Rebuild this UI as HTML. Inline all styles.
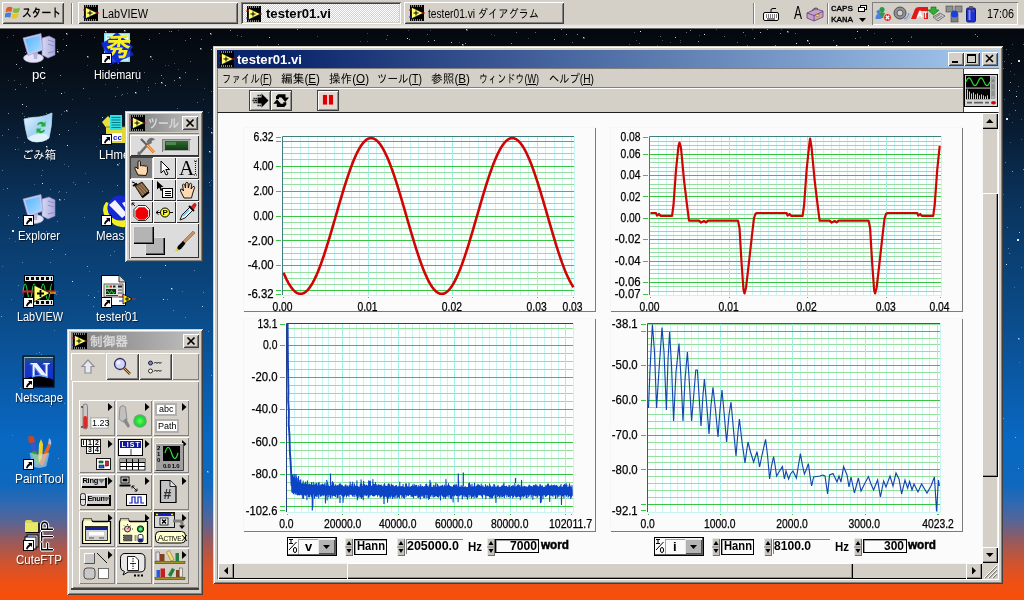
<!DOCTYPE html>
<html lang="ja"><head><meta charset="utf-8"><title>tester01.vi</title>
<style>
html,body{margin:0;padding:0}
body{width:1024px;height:600px;overflow:hidden;position:relative;background:linear-gradient(180deg,#05080d 0px,#05080d 28px,#07131f 90px,#081c32 130px,#092a4c 170px,#0a3560 210px,#0a3e70 250px,#0b4c8a 320px,#0a5cac 390px,#0868c2 440px,#0e68be 484px,#2c6ab2 502px,#5a6494 522px,#9a5a5a 542px,#cc5432 562px,#ee5014 582px,#f84e08 600px); font-family:"Liberation Sans","IPAGothic",sans-serif;font-size:12px}
.t,.s{position:absolute;white-space:nowrap}
u{text-decoration:underline;text-underline-offset:1px}
#root{position:absolute;left:0;top:0;width:1024px;height:600px;overflow:hidden;will-change:transform}
</style></head><body><div id="root">
<svg style="position:absolute;left:0px;top:0px;shape-rendering:crispEdges;" width="1024" height="600" viewBox="0 0 1024 600"><path d="M716 29.5h1M781 29.5h1M752 29.5h1M430 30.5h1M408 30.5h1M178 30.5h1M634 32.5h1M367 33.5h1M874 33.5h1M491 34.5h1M745 35.5h1M699 35.5h1M494 35.5h1M317 36.5h1M911 36.5h1M7 37.5h1M860 37.5h1M528 38.5h1M35 39.5h1M63 39.5h1M662 40.5h1M680 40.5h1M636 40.5h1M360 41.5h1M367 41.5h1M670 42.5h1M459 42.5h1M680 42.5h1M941 43.5h1M107 43.5h1M629 44.5h1M1012 44.5h1M657 45.5h1M26 47.5h1M42 49.5h1M172 50.5h1M63 50.5h1M1008 54.5h1M174 63.5h1M165 65.5h1M168 65.5h1M87 65.5h1M178 69.5h1M138 70.5h1M1010 71.5h1M1014 74.5h1M37 76.5h1M163 78.5h1M8 80.5h1M14 80.5h1M137 81.5h1M42 83.5h1M105 84.5h1M117 87.5h1M204 88.5h1M45 90.5h1M64 92.5h1M127 93.5h1M121 95.5h1M89 98.5h1M203 99.5h1M1004 99.5h1M72 99.5h1M1013 103.5h1M208 112.5h1M1009 114.5h1M44 118.5h1M1021 119.5h1M1012 122.5h1M76 122.5h1M109 125.5h1M98 126.5h1M208 127.5h1M211 128.5h1M1021 139.5h1M99 139.5h1M46 140.5h1M1010 142.5h1M96 146.5h1M18 149.5h1M64 164.5h1M85 173.5h1M211 180.5h1M34 184.5h1M210 185.5h1M3 189.5h1M102 191.5h1M58 192.5h1M1003 194.5h1M8 215.5h1M120 226.5h1M15 241.5h1M2 266.5h1M89 271.5h1M40 275.5h1M117 281.5h1M1014 287.5h1M57 291.5h1M98 291.5h1M182 291.5h1M25 293.5h1M56 294.5h1M112 296.5h1M11 299.5h1M51 305.5h1M49 309.5h1M103 322.5h1M54 330.5h1M36 353.5h1M1019 362.5h1M51 363.5h1M41 376.5h1M12 435.5h1" stroke="#dfe8f8" stroke-opacity="0.28" stroke-width="1" fill="none"/><path d="M169 31.5h1M535 32.5h1M516 32.5h1M686 32.5h1M795 33.5h1M159 33.5h1M427 34.5h1M387 35.5h1M13 35.5h1M81 35.5h1M237 35.5h1M660 36.5h1M241 36.5h1M724 36.5h1M94 37.5h1M911 37.5h1M201 39.5h1M386 39.5h1M833 40.5h1M185 40.5h1M892 41.5h1M737 42.5h1M572 42.5h1M885 42.5h1M639 43.5h1M34 44.5h1M1023 44.5h1M747 45.5h1M257 45.5h1M108 46.5h1M57 49.5h1M1006 49.5h1M127 50.5h1M17 50.5h1M25 52.5h1M152 59.5h1M1004 61.5h1M190 61.5h1M21 67.5h1M1003 68.5h1M19 68.5h1M117 69.5h1M144 72.5h1M155 83.5h1M20 84.5h1M180 85.5h1M1018 86.5h1M26 87.5h1M148 87.5h1M148 90.5h1M1016 91.5h1M211 91.5h1M122 94.5h1M115 96.5h1M197 102.5h1M177 108.5h1M64 111.5h1M46 113.5h1M22 113.5h1M61 114.5h1M24 116.5h1M28 117.5h1M105 120.5h1M30 134.5h1M102 134.5h1M2 135.5h1M17 137.5h1M24 142.5h1M50 160.5h1M1005 162.5h1M119 163.5h1M68 166.5h1M2 170.5h1M42 170.5h1M41 175.5h1M88 182.5h1M73 182.5h1M75 184.5h1M50 189.5h1M59 191.5h1M66 192.5h1M64 199.5h1M1020 207.5h1M118 208.5h1M84 217.5h1M57 221.5h1M1007 227.5h1M46 231.5h1M9 238.5h1M1008 248.5h1M114 251.5h1M1009 253.5h1M110 255.5h1M22 262.5h1M50 262.5h1M1021 267.5h1M194 270.5h1M117 280.5h1M18 285.5h1M203 292.5h1M88 295.5h1M167 299.5h1M93 306.5h1M173 310.5h1M185 317.5h1M208 331.5h1M39 352.5h1M41 354.5h1M211 375.5h1M32 381.5h1M30 385.5h1M20 388.5h1M64 403.5h1M50 406.5h1M1003 418.5h1M58 458.5h1" stroke="#dfe8f8" stroke-opacity="0.42" stroke-width="1" fill="none"/><path d="M767 29.5h1M561 29.5h1M297 29.5h1M690 30.5h1M867 30.5h1M230 30.5h1M171 31.5h1M743 32.5h1M780 33.5h1M566 34.5h1M577 34.5h1M975 34.5h1M977 36.5h1M891 38.5h1M855 38.5h1M190 38.5h1M754 38.5h1M149 39.5h1M409 39.5h1M428 41.5h1M908 41.5h1M698 41.5h1M511 43.5h1M465 43.5h1M278 44.5h1M775 45.5h1M211 49.5h1M118 63.5h1M1011 63.5h1M185 72.5h1M161 75.5h1M60 75.5h1M197 79.5h1M174 80.5h1M1010 82.5h1M83 88.5h1M15 89.5h1M26 106.5h1M1015 110.5h1M8 113.5h1M106 127.5h1M8 129.5h1M68 130.5h1M103 138.5h1M15 149.5h1M100 155.5h1M1023 169.5h1M1012 171.5h1M209 182.5h1M117 185.5h1M7 188.5h1M18 217.5h1M65 254.5h1M87 266.5h1M140 277.5h1M47 286.5h1M26 292.5h1M36 293.5h1M1 316.5h1M1015 437.5h1M1018 468.5h1M16 479.5h1" stroke="#dfe8f8" stroke-opacity="0.6" stroke-width="1" fill="none"/><path d="M466 29.5h1M124 30.5h1M105 31.5h1M787 31.5h1M760 32.5h1M66 33.5h1M210 33.5h1M106 34.5h1M675 37.5h1M583 37.5h1M269 37.5h1M120 38.5h1M554 39.5h1M434 40.5h1M451 42.5h1M809 43.5h1M462 44.5h1M50 47.5h1M200 48.5h1M87 56.5h1M150 56.5h1M16 64.5h1M179 77.5h1M165 85.5h1M1009 90.5h1M66 110.5h1M102 117.5h1M211 132.5h1M59 134.5h1M110 142.5h1M117 164.5h1M59 199.5h1M1019 232.5h1M52 249.5h1M94 297.5h1M202 306.5h1M1018 338.5h1M207 471.5h1" stroke="#dfe8f8" stroke-opacity="0.8" stroke-width="1" fill="none"/><path d="M640 31.5h1M857 31.5h1M704 34.5h1M407 38.5h1M807 40.5h1M796 43.5h1M836 45.5h1M66 45.5h1M868 45.5h1M44 48.5h1M57 51.5h1M42 67.5h1M161 82.5h1M135 92.5h1M61 93.5h1M1016 96.5h1M22 104.5h1M49 124.5h1M67 145.5h1M46 146.5h1M209 151.5h1M42 183.5h1M1006 264.5h1M165 265.5h1M72 281.5h1M171 288.5h1M163 299.5h1M125 311.5h1" stroke="#dfe8f8" stroke-opacity="1.0" stroke-width="1" fill="none"/><path d="M466 29.5h2M466 30.5h2M124 30.5h2M124 31.5h2M105 31.5h2M105 32.5h2M787 31.5h2M787 32.5h2M66 33.5h2M66 34.5h2M210 33.5h2M210 34.5h2M583 37.5h2M583 38.5h2M807 40.5h2M807 41.5h2M462 44.5h2M462 45.5h2M836 45.5h2M836 46.5h2M50 47.5h2M50 48.5h2M200 48.5h2M200 49.5h2M57 51.5h2M57 52.5h2M87 56.5h2M87 57.5h2M150 56.5h2M150 57.5h2M179 77.5h2M179 78.5h2M161 82.5h2M161 83.5h2M135 92.5h2M135 93.5h2M66 110.5h2M66 111.5h2M49 124.5h2M49 125.5h2M211 132.5h2M211 133.5h2M46 146.5h2M46 147.5h2M209 151.5h2M209 152.5h2M117 164.5h2M117 165.5h2M59 199.5h2M59 200.5h2M171 288.5h2M171 289.5h2M1018 338.5h2M1018 339.5h2M207 471.5h2M207 472.5h2" stroke="#dfe8f8" stroke-opacity="0.30" stroke-width="1" fill="none"/><rect x="1018" y="60" width="2" height="2" fill="#fff" opacity="0.9"/><rect x="1006" y="118" width="2" height="2" fill="#fff" opacity="0.9"/><rect x="1017" y="239" width="2" height="2" fill="#fff" opacity="0.9"/><rect x="948" y="110" width="2" height="2" fill="#fff" opacity="0.9"/><rect x="12" y="230" width="2" height="2" fill="#fff" opacity="0.9"/></svg>
<div style="position:absolute;left:0px;top:0px;width:1024px;height:29px;background:linear-gradient(180deg,#d4d0c8 0,#d4d0c8 24px,#e2e0da 25px,#ecebe6 27px,#f0efea 28px,#6c6c6c 28px,#6c6c6c 29px);"></div>
<div style="position:absolute;left:2px;top:2px;width:62px;height:22px;background:#d4d0c8;box-shadow:inset 1px 1px 0 #fff,inset -1px -1px 0 #404040,inset 2px 2px 0 #d4d0c8,inset -2px -2px 0 #808080;"></div>
<svg style="position:absolute;left:5px;top:5px;" width="17" height="15" viewBox="0 0 17 15"><path d="M1.5 3 Q4 1 7.5 2.5 L6.5 7 Q3.5 5.6 0.5 7.4Z" fill="#e8572a"/><path d="M8.6 2.9 Q11.5 4.2 15 2.4 L14 7 Q11 8.6 7.6 7.3Z" fill="#7dbb3c"/><path d="M0.3 8.4 Q3.3 6.6 6.3 8 L5.3 12.6 Q2.3 11.2 -0.7 13Z" fill="#3f7fd6"/><path d="M7.4 8.4 Q10.6 9.6 13.8 8 L12.8 12.6 Q9.8 14.2 6.4 12.9Z" fill="#f0c22a"/></svg>
<div class="t" style="left:22px;top:5.0px;line-height:16px;font-size:12px;font-weight:bold;color:#000;font-family:&quot;Liberation Sans&quot;,&quot;IPAGothic&quot;,sans-serif;transform:scaleX(0.8125);transform-origin:0 50%;">スタート</div>
<div style="position:absolute;left:71px;top:3px;width:1px;height:21px;background:#808080"></div>
<div style="position:absolute;left:72px;top:3px;width:1px;height:21px;background:#fff"></div>
<div style="position:absolute;left:78px;top:2px;width:160px;height:22px;background:#d4d0c8;box-shadow:inset 1px 1px 0 #fff,inset -1px -1px 0 #404040,inset 2px 2px 0 #d4d0c8,inset -2px -2px 0 #808080;"></div>
<svg style="position:absolute;left:83px;top:5px" width="16" height="16" viewBox="0 0 16 16"><rect x="1" y="0" width="14" height="16" fill="#000"/><path d="M2 1h12M2 15h12" stroke="#fff" stroke-width="1" stroke-dasharray="1 1"/><path d="M2.500 2.200 L14.500 8 L2.500 13.800Z" fill="#ffff70" stroke="#000" stroke-width="0.700"/><path d="M4.500 8h5M7 5.500v5" stroke="#000" stroke-width="1"/><path d="M0 5h3" stroke="#e00000" stroke-width="1"/><path d="M13 8h3" stroke="#e00000" stroke-width="1"/><path d="M0 12h2" stroke="#2020ff" stroke-width="1"/></svg>
<div class="t" style="left:102px;top:5.5px;line-height:16px;font-size:12px;font-weight:normal;color:#000;font-family:&quot;Liberation Sans&quot;,&quot;IPAGothic&quot;,sans-serif;transform:scaleX(0.9072);transform-origin:0 50%;">LabVIEW</div>
<div style="position:absolute;left:241px;top:2px;width:160px;height:22px;background:#eae8e3;box-shadow:inset 1px 1px 0 #808080,inset -1px -1px 0 #fff,inset 2px 2px 0 #404040,inset -2px -2px 0 #d4d0c8;background-image:repeating-conic-gradient(#fff 0 25%,#d4d0c8 0 50%);background-size:2px 2px;"></div>
<svg style="position:absolute;left:246px;top:6px" width="16" height="16" viewBox="0 0 16 16"><rect x="1" y="0" width="14" height="16" fill="#000"/><path d="M2 1h12M2 15h12" stroke="#fff" stroke-width="1" stroke-dasharray="1 1"/><path d="M2.500 2.200 L14.500 8 L2.500 13.800Z" fill="#ffff70" stroke="#000" stroke-width="0.700"/><path d="M4.500 8h5M7 5.500v5" stroke="#000" stroke-width="1"/><path d="M0 5h3" stroke="#e00000" stroke-width="1"/><path d="M13 8h3" stroke="#e00000" stroke-width="1"/><path d="M0 12h2" stroke="#2020ff" stroke-width="1"/></svg>
<div class="t" style="left:266px;top:6.0px;line-height:16px;font-size:12px;font-weight:bold;color:#000;font-family:&quot;Liberation Sans&quot;,&quot;IPAGothic&quot;,sans-serif;transform:scaleX(1.0947);transform-origin:0 50%;">tester01.vi</div>
<div style="position:absolute;left:404px;top:2px;width:160px;height:22px;background:#d4d0c8;box-shadow:inset 1px 1px 0 #fff,inset -1px -1px 0 #404040,inset 2px 2px 0 #d4d0c8,inset -2px -2px 0 #808080;"></div>
<svg style="position:absolute;left:409px;top:5px" width="16" height="16" viewBox="0 0 16 16"><rect x="1" y="0" width="14" height="16" fill="#000"/><path d="M2 1h12M2 15h12" stroke="#fff" stroke-width="1" stroke-dasharray="1 1"/><path d="M2.500 2.200 L14.500 8 L2.500 13.800Z" fill="#ffff70" stroke="#000" stroke-width="0.700"/><path d="M4.500 8h5M7 5.500v5" stroke="#000" stroke-width="1"/><path d="M0 5h3" stroke="#e00000" stroke-width="1"/><path d="M13 8h3" stroke="#e00000" stroke-width="1"/><path d="M0 12h2" stroke="#2020ff" stroke-width="1"/></svg>
<div class="t" style="left:428px;top:5.5px;line-height:16px;font-size:12px;font-weight:normal;color:#000;font-family:&quot;Liberation Sans&quot;,&quot;IPAGothic&quot;,sans-serif;transform:scaleX(0.8493);transform-origin:0 50%;">tester01.vi ダイアグラム</div>
<div style="position:absolute;left:753px;top:3px;width:1px;height:21px;background:#808080"></div>
<div style="position:absolute;left:754px;top:3px;width:1px;height:21px;background:#fff"></div>
<svg style="position:absolute;left:762px;top:6px;" width="18" height="16" viewBox="0 0 18 16"><rect x="1.5" y="6.5" width="15" height="8" rx="1.5" fill="#fff" stroke="#000"/><path d="M4 9h11M4 11h11" stroke="#000" stroke-dasharray="1 1"/><path d="M5 13h8" stroke="#000"/><path d="M9 6V4q0-1.5 2-1.5h3" stroke="#000" fill="none"/></svg>
<div class="t" style="left:794px;top:1.5px;line-height:22px;font-size:18px;font-weight:normal;color:#000;font-family:&quot;Liberation Sans&quot;,&quot;IPAGothic&quot;,sans-serif;transform:scaleX(0.6658);transform-origin:0 50%;">A</div>
<svg style="position:absolute;left:806px;top:5px;" width="18" height="17" viewBox="0 0 18 17"><path d="M1 8 L10 4 L17 6 L17 12 L8 16 L1 13Z" fill="#c8a0d0" stroke="#604070" stroke-width="0.8"/><path d="M1 8 L8 10.5 L17 6.5M8 10.5V16" stroke="#604070" stroke-width="0.8" fill="none"/><path d="M6 5.5 q3-4 6-1.5" stroke="#404040" fill="none"/><rect x="10" y="9.5" width="3" height="2" fill="#f0e060" stroke="#806000" stroke-width="0.4"/></svg>
<div style="position:absolute;left:827px;top:3px;width:1px;height:21px;background:#808080"></div>
<div style="position:absolute;left:828px;top:3px;width:1px;height:21px;background:#fff"></div>
<div class="t" style="left:831px;top:2.5px;line-height:12px;font-size:8px;font-weight:normal;color:#000;font-family:&quot;Liberation Mono&quot;,monospace;transform:scaleX(1.1456);transform-origin:0 50%;-webkit-text-stroke:0.3px #000;">CAPS</div>
<div class="t" style="left:831px;top:13.5px;line-height:12px;font-size:8px;font-weight:normal;color:#000;font-family:&quot;Liberation Mono&quot;,monospace;transform:scaleX(1.1456);transform-origin:0 50%;-webkit-text-stroke:0.3px #000;">KANA</div>
<svg style="position:absolute;left:857px;top:4px;" width="11" height="20" viewBox="0 0 11 20"><rect x="3.5" y="1.5" width="6" height="4" fill="#fff" stroke="#000"/><rect x="1.5" y="3.5" width="6" height="4" fill="#fff" stroke="#000"/><path d="M2 14h7l-3.5 4z" fill="#000"/></svg>
<div style="position:absolute;left:872px;top:2px;width:146px;height:23px;background:#d4d0c8;box-shadow:inset 1px 1px 0 #808080,inset -1px -1px 0 #fff;"></div>
<svg style="position:absolute;left:875px;top:5px;" width="18" height="18" viewBox="0 0 18 18"><circle cx="7" cy="4.5" r="2.6" fill="#2a9a48"/><path d="M3 13 q0-6 4-6 q4 0 4 6z" fill="#2a9a48"/><circle cx="3.5" cy="7" r="2" fill="#4a80d8"/><path d="M0.5 14 q0-5 3-5 q3 0 3 5z" fill="#4a80d8"/><circle cx="12.5" cy="12.5" r="4" fill="#e03020" stroke="#fff" stroke-width="0.6"/><path d="M10.8 10.8l3.4 3.4M14.2 10.8l-3.4 3.4" stroke="#fff" stroke-width="1.3"/></svg>
<svg style="position:absolute;left:893px;top:5px;" width="18" height="18" viewBox="0 0 18 18"><circle cx="7" cy="8" r="6" fill="#909090" stroke="#505050"/><circle cx="7" cy="8" r="3" fill="#d0d0d0" stroke="#606060"/><path d="M11 14 q4-1 5-6" stroke="#7090d0" fill="none" stroke-width="1.2"/><path d="M12 16 q5-2 6-7" stroke="#a0b8e8" fill="none"/></svg>
<svg style="position:absolute;left:910px;top:6px;" width="19" height="15" viewBox="0 0 19 15"><path d="M1 13 L5 3 Q6 1 9 1 L18 1 L18 13 L14 13 L14 5 L9 5 L6 13Z" fill="#e01818"/><path d="M7.5 11.5 L10 5.5 L12 11.5M8.5 9.5h3M13.5 6h4M15.5 6v6" stroke="#fff" stroke-width="1.3" fill="none"/></svg>
<svg style="position:absolute;left:928px;top:5px;" width="18" height="18" viewBox="0 0 18 18"><path d="M3 2 h5 v3 h3 l-5.5 5 L0 5 h3z" fill="#30b030" stroke="#106010" stroke-width="0.6"/><path d="M5 12 L12 8 L17 11 L10 16Z" fill="#c8c8c8" stroke="#505050" stroke-width="0.7"/><path d="M7 12.5l5-3M9 14l5-3" stroke="#505050" stroke-width="0.6"/></svg>
<svg style="position:absolute;left:945px;top:5px;" width="18" height="18" viewBox="0 0 18 18"><rect x="1" y="1" width="7" height="6" fill="#909090" stroke="#404040" stroke-width="0.6"/><rect x="10" y="1" width="7" height="6" fill="#909090" stroke="#404040" stroke-width="0.6"/><rect x="6" y="9" width="7" height="8" fill="#808080" stroke="#404040" stroke-width="0.6"/><circle cx="9.5" cy="9" r="3.6" fill="#1840e0"/></svg>
<svg style="position:absolute;left:964px;top:5px;" width="14" height="18" viewBox="0 0 14 18"><rect x="2.5" y="3" width="9" height="14" rx="1.5" fill="#2030d0" stroke="#101878"/><rect x="5" y="1" width="4" height="2.5" fill="#606060"/><rect x="4.5" y="5" width="2" height="10" fill="#8090ff"/><path d="M8 6h2" stroke="#f04040" stroke-width="1.2"/></svg>
<div class="t" style="left:987px;top:5.5px;line-height:16px;font-size:12px;font-weight:normal;color:#000;font-family:&quot;Liberation Sans&quot;,&quot;IPAGothic&quot;,sans-serif;transform:scaleX(0.8991);transform-origin:0 50%;">17:06</div>
<svg style="position:absolute;left:22px;top:33px;" width="34" height="32" viewBox="0 0 34 32"><defs><linearGradient id="scr" x1="0" y1="0" x2="1" y2="1"><stop offset="0" stop-color="#58b4ff"/><stop offset="1" stop-color="#a8dcff"/></linearGradient><linearGradient id="twr" x1="0" y1="0" x2="1" y2="0"><stop offset="0" stop-color="#d8d8f4"/><stop offset="1" stop-color="#a8a8dc"/></linearGradient></defs><path d="M20 5 L27 3 L33 6 L33 22 L26 25 L20 22Z" fill="url(#twr)" stroke="#8888c0" stroke-width="0.6"/><path d="M26 7 L32 9 M26 11l6 2 M26 20l6-1.5" stroke="#8484b8" stroke-width="0.8" fill="none"/><ellipse cx="11.5" cy="25" rx="10" ry="4.600" fill="#e4e4f6" stroke="#b8b8dc" stroke-width="0.6"/><path d="M11 19 L16 18 L15 26 L12 26Z" fill="#b4b4e0"/><path d="M1 5 L19 0.500 L21 17 L6 22.500Z" fill="#c8c8ee" stroke="#9c9cd0" stroke-width="0.6"/><path d="M3.200 6.300 L17.600 2.600 L19.300 15.800 L7 20.300Z" fill="url(#scr)"/></svg>
<div class="t" style="left:32px;top:66.5px;line-height:16px;font-size:12px;font-weight:normal;color:#fff;font-family:&quot;Liberation Sans&quot;,&quot;IPAGothic&quot;,sans-serif;transform:scaleX(1.1034);transform-origin:0 50%;text-shadow:1px 1px 1px rgba(0,0,0,.6);">pc</div>
<svg style="position:absolute;left:100px;top:33px;" width="34" height="32" viewBox="0 0 34 32"><rect x="4" y="0" width="26" height="29" fill="#7ee0e8"/><rect x="5.500" y="1.500" width="23" height="26" fill="#e8ffff"/><path d="M7 4h20M7 7h20M7 10h20M7 13h20M7 16h20M7 19h20M7 22h20M7 25h20" stroke="#30b8c8" stroke-width="1"/><path d="M17 -1 L33 14 L18 31 L2 12Z" fill="#1028d8"/><path d="M19 2 L34 22 L10 32 L1 10Z" fill="#1028d8" opacity="0.85"/></svg>
<div style="position:absolute;left:106px;top:32px;width:24px;height:30px;line-height:30px;font-size:25px;font-weight:bold;color:#f8f020;font-family:&quot;Liberation Sans&quot;,&quot;Noto Sans CJK JP&quot;,sans-serif;text-align:center;transform:skewX(-8deg)">秀</div>
<svg style="position:absolute;left:101px;top:53px;" width="11" height="11" viewBox="0 0 11 11"><rect x="0" y="0" width="11" height="11" fill="#000"/><rect x="1" y="1" width="9" height="9" fill="#fff"/><path d="M5 3h4v4l-1.3-1.300 C6 7 5 8 4.500 9.500 L3 9 C3.500 7 4.500 5.500 6.300 4.300z" fill="#000"/></svg>
<div class="t" style="left:94px;top:66.5px;line-height:16px;font-size:12px;font-weight:normal;color:#fff;font-family:&quot;Liberation Sans&quot;,&quot;IPAGothic&quot;,sans-serif;transform:scaleX(0.9033);transform-origin:0 50%;text-shadow:1px 1px 1px rgba(0,0,0,.6);">Hidemaru</div>
<svg style="position:absolute;left:22px;top:112px;" width="32" height="32" viewBox="0 0 32 32"><defs><linearGradient id="bin" x1="0" y1="0" x2="1" y2="1"><stop offset="0" stop-color="#f0f8ff"/><stop offset="0.500" stop-color="#a4d2f4"/><stop offset="1" stop-color="#d4eafc"/></linearGradient></defs><path d="M2 7 Q10 5 17 5 Q24 4 30 1 Q30 14 27 26 Q22 30 15 30 Q9 30 6 27 Q3 16 2 7Z" fill="url(#bin)" stroke="#b8dcf4" stroke-width="0.8"/><path d="M6 26 Q12 21 24 22 Q26 24 27 26 Q22 30 15 30 Q9 30 6 26Z" fill="#e6f4fc" opacity="0.9"/><path d="M15 12 q4-4 7-1 l1.500-1.500 v5 h-5 l1.500-1.500 q-2-2-4 0.500z" fill="#1fae3a"/><path d="M23 19 q-4 4-7 1 l-1.500 1.500 v-5 h5 l-1.500 1.500 q2 2 4-0.500z" fill="#1fae3a"/></svg>
<div class="t" style="left:22px;top:147.0px;line-height:16px;font-size:12px;font-weight:normal;color:#fff;font-family:&quot;Liberation Sans&quot;,&quot;IPAGothic&quot;,sans-serif;transform:scaleX(0.9444);transform-origin:0 50%;text-shadow:1px 1px 1px rgba(0,0,0,.6);">ごみ箱</div>
<svg style="position:absolute;left:100px;top:113px;" width="34" height="34" viewBox="0 0 34 34"><path d="M2 9 L8 3 L11 6 L11 16 L7 16Z" fill="#e8e040"/><rect x="6" y="14" width="22" height="16" fill="#e0d838"/><path d="M6 14h22" stroke="#908800"/><path d="M28 14 L32 10 V26 L28 30Z" fill="#a8a020"/><rect x="10" y="2" width="12" height="15" fill="#30e0e8"/><path d="M11.500 4.500h9M11.500 7h9M11.500 9.500h9M11.500 12h9M11.500 14.500h9" stroke="#087880" stroke-width="1"/><rect x="12" y="20" width="10" height="8" fill="#fff"/></svg>
<div style="position:absolute;left:113px;top:134px;font:bold 8px/8px &quot;Liberation Sans&quot;,sans-serif;color:#1010c8">cc</div>
<svg style="position:absolute;left:101px;top:134px;" width="11" height="11" viewBox="0 0 11 11"><rect x="0" y="0" width="11" height="11" fill="#000"/><rect x="1" y="1" width="9" height="9" fill="#fff"/><path d="M5 3h4v4l-1.3-1.300 C6 7 5 8 4.500 9.500 L3 9 C3.500 7 4.500 5.500 6.300 4.300z" fill="#000"/></svg>
<div class="t" style="left:99px;top:147.0px;line-height:16px;font-size:12px;font-weight:normal;color:#fff;font-family:&quot;Liberation Sans&quot;,&quot;IPAGothic&quot;,sans-serif;transform:scaleX(0.9470);transform-origin:0 50%;text-shadow:1px 1px 1px rgba(0,0,0,.6);">LHmelt</div>
<svg style="position:absolute;left:22px;top:194px;" width="34" height="32" viewBox="0 0 34 32"><defs><linearGradient id="scrb" x1="0" y1="0" x2="1" y2="1"><stop offset="0" stop-color="#58b4ff"/><stop offset="1" stop-color="#a8dcff"/></linearGradient><linearGradient id="twrb" x1="0" y1="0" x2="1" y2="0"><stop offset="0" stop-color="#d8d8f4"/><stop offset="1" stop-color="#a8a8dc"/></linearGradient></defs><path d="M20 5 L27 3 L33 6 L33 22 L26 25 L20 22Z" fill="url(#twrb)" stroke="#8888c0" stroke-width="0.6"/><path d="M26 7 L32 9 M26 11l6 2 M26 20l6-1.5" stroke="#8484b8" stroke-width="0.8" fill="none"/><ellipse cx="11.5" cy="25" rx="10" ry="4.600" fill="#e4e4f6" stroke="#b8b8dc" stroke-width="0.6"/><path d="M11 19 L16 18 L15 26 L12 26Z" fill="#b4b4e0"/><path d="M1 5 L19 0.500 L21 17 L6 22.500Z" fill="#c8c8ee" stroke="#9c9cd0" stroke-width="0.6"/><path d="M3.200 6.300 L17.600 2.600 L19.300 15.800 L7 20.300Z" fill="url(#scrb)"/></svg>
<svg style="position:absolute;left:23px;top:215px;" width="11" height="11" viewBox="0 0 11 11"><rect x="0" y="0" width="11" height="11" fill="#000"/><rect x="1" y="1" width="9" height="9" fill="#fff"/><path d="M5 3h4v4l-1.3-1.300 C6 7 5 8 4.500 9.500 L3 9 C3.500 7 4.500 5.500 6.300 4.300z" fill="#000"/></svg>
<div class="t" style="left:18px;top:228.0px;line-height:16px;font-size:12px;font-weight:normal;color:#fff;font-family:&quot;Liberation Sans&quot;,&quot;IPAGothic&quot;,sans-serif;transform:scaleX(0.9399);transform-origin:0 50%;text-shadow:1px 1px 1px rgba(0,0,0,.6);">Explorer</div>
<svg style="position:absolute;left:100px;top:194px;" width="34" height="34" viewBox="0 0 34 34"><path d="M6 8 Q0 16 6 24 Q12 32 26 30 L26 26 Q14 27 10 21 Q6 15 9 9Z" fill="#f4f020"/><circle cx="20" cy="14" r="12.500" fill="#1428d8"/><path d="M9 11 L15 6 L27 20 L22 24Z" fill="#f4f4f8"/><path d="M22 9 l5-2 -1 8z" fill="#f4f4f8"/><path d="M14 26 Q22 31 30 27 L30 32 Q20 35 13 30Z" fill="#f4f020"/></svg>
<svg style="position:absolute;left:101px;top:215px;" width="11" height="11" viewBox="0 0 11 11"><rect x="0" y="0" width="11" height="11" fill="#000"/><rect x="1" y="1" width="9" height="9" fill="#fff"/><path d="M5 3h4v4l-1.3-1.300 C6 7 5 8 4.500 9.500 L3 9 C3.500 7 4.500 5.500 6.300 4.300z" fill="#000"/></svg>
<div class="t" style="left:96px;top:228.0px;line-height:16px;font-size:12px;font-weight:normal;color:#fff;font-family:&quot;Liberation Sans&quot;,&quot;IPAGothic&quot;,sans-serif;transform:scaleX(0.9639);transform-origin:0 50%;text-shadow:1px 1px 1px rgba(0,0,0,.6);">Measure</div>
<svg style="position:absolute;left:22px;top:274px;" width="34" height="34" viewBox="0 0 34 34"><rect x="2" y="1" width="30" height="31" fill="#000"/><rect x="3" y="2" width="28" height="5" fill="#e8e8e8"/><rect x="3" y="26" width="28" height="5" fill="#e8e8e8"/><path d="M4 4.500h26M4 28.500h26" stroke="#000" stroke-width="3" stroke-dasharray="3 2"/><path d="M1 18 q2-16 4.500 0 t4.500 0 q2-16 4.500 0 t4.500 0 q2-16 4.500 0 t4.500 0 q1-8 2-8" stroke="#20d050" stroke-width="1.200" fill="none"/><path d="M0 17.500h34" stroke="#e02020" stroke-width="2"/><path d="M12 11 L28 19 L12 28Z" fill="#ffff70" stroke="#000" stroke-width="0.800"/><path d="M15 19.500h7M18.500 16v7" stroke="#000" stroke-width="1.800"/><path d="M28 19h6" stroke="#ff9020" stroke-width="1.500"/></svg>
<svg style="position:absolute;left:23px;top:297px;" width="11" height="11" viewBox="0 0 11 11"><rect x="0" y="0" width="11" height="11" fill="#000"/><rect x="1" y="1" width="9" height="9" fill="#fff"/><path d="M5 3h4v4l-1.3-1.300 C6 7 5 8 4.500 9.500 L3 9 C3.500 7 4.500 5.500 6.300 4.300z" fill="#000"/></svg>
<div class="t" style="left:17px;top:308.5px;line-height:16px;font-size:12px;font-weight:normal;color:#fff;font-family:&quot;Liberation Sans&quot;,&quot;IPAGothic&quot;,sans-serif;transform:scaleX(0.9072);transform-origin:0 50%;text-shadow:1px 1px 1px rgba(0,0,0,.6);">LabVIEW</div>
<svg style="position:absolute;left:100px;top:274px;" width="36" height="34" viewBox="0 0 36 34"><path d="M1.500 1.500 H19 L25.500 8 V31.500 H1.500Z" fill="#fff" stroke="#000"/><path d="M19 1.500V8H25.500" fill="#d8d8d8" stroke="#000" stroke-width="0.800"/><rect x="4" y="10" width="19" height="13" fill="#e0e0e0" stroke="#404040" stroke-width="0.800"/><rect x="6" y="15" width="10" height="5" fill="#103010"/><path d="M6.500 18 q1-3 2 0 t2 0 t2 0 t2 0" stroke="#30e040" fill="none" stroke-width="0.900"/><rect x="6" y="11.500" width="2.500" height="2" fill="#20c020"/><rect x="9.500" y="11.500" width="2.500" height="2" fill="#c02020"/><rect x="13" y="11.500" width="2.500" height="2" fill="#202020"/><rect x="18" y="11.500" width="4" height="2" fill="#202020"/><path d="M18 16h4M18 19h4M6 21.500h12" stroke="#404040"/><path d="M23 20 L32 25 L23 30Z" fill="#ffe820" stroke="#000" stroke-width="0.800"/><path d="M25 25h4M27 23v4" stroke="#000"/><path d="M32 25h4" stroke="#e02020"/><path d="M19 27h4" stroke="#2020d0"/><path d="M19 23h4" stroke="#e02020"/></svg>
<svg style="position:absolute;left:101px;top:297px;" width="11" height="11" viewBox="0 0 11 11"><rect x="0" y="0" width="11" height="11" fill="#000"/><rect x="1" y="1" width="9" height="9" fill="#fff"/><path d="M5 3h4v4l-1.3-1.300 C6 7 5 8 4.500 9.500 L3 9 C3.500 7 4.500 5.500 6.300 4.300z" fill="#000"/></svg>
<div class="t" style="left:96px;top:308.5px;line-height:16px;font-size:12px;font-weight:normal;color:#fff;font-family:&quot;Liberation Sans&quot;,&quot;IPAGothic&quot;,sans-serif;transform:scaleX(0.9686);transform-origin:0 50%;text-shadow:1px 1px 1px rgba(0,0,0,.6);">tester01</div>
<svg style="position:absolute;left:22px;top:355px;" width="34" height="34" viewBox="0 0 34 34"><defs><linearGradient id="ns" x1="0" y1="0" x2="0" y2="1"><stop offset="0" stop-color="#285858"/><stop offset="0.300" stop-color="#1838c0"/><stop offset="0.700" stop-color="#1030d0"/></linearGradient></defs><rect x="1" y="1" width="31" height="31" fill="url(#ns)" stroke="#000"/><path d="M2 2.500h29" stroke="#c0c8e0" stroke-width="0.800"/><path d="M2.500 2v29" stroke="#8090c0" stroke-width="0.800"/></svg>
<div style="position:absolute;left:27px;top:357px;width:26px;text-align:center;font:bold 28px/30px &quot;Liberation Serif&quot;,serif;color:#eef2ff;text-shadow:-1px 1px 0 #5878d8">N</div>
<svg style="position:absolute;left:22px;top:355px;" width="34" height="34" viewBox="0 0 34 34"><path d="M1.500 31.500 V25 Q14 17 31.500 25 V31.500Z" fill="#000"/><path d="M10 22 Q17 19 25 22" stroke="#60a0ff" stroke-width="1.500" fill="none"/></svg>
<svg style="position:absolute;left:23px;top:378px;" width="11" height="11" viewBox="0 0 11 11"><rect x="0" y="0" width="11" height="11" fill="#000"/><rect x="1" y="1" width="9" height="9" fill="#fff"/><path d="M5 3h4v4l-1.3-1.300 C6 7 5 8 4.500 9.500 L3 9 C3.500 7 4.500 5.500 6.300 4.300z" fill="#000"/></svg>
<div class="t" style="left:15px;top:390.0px;line-height:16px;font-size:12px;font-weight:normal;color:#fff;font-family:&quot;Liberation Sans&quot;,&quot;IPAGothic&quot;,sans-serif;transform:scaleX(0.9467);transform-origin:0 50%;text-shadow:1px 1px 1px rgba(0,0,0,.6);">Netscape</div>
<svg style="position:absolute;left:22px;top:436px;" width="34" height="34" viewBox="0 0 34 34"><path d="M7 3 L12 2 L17 24 L13 26Z" fill="#3858c8"/><path d="M6 1 q3-2 6 0 l1 5 -6 1z" fill="#c84820"/><path d="M17 8 L19 3 L21 8 L20 27 L16 27Z" fill="#f0d020"/><path d="M26 8 L29 9 L21 30 L17 28Z" fill="#f06020"/><path d="M27 2 q3 2 2 7 l-3-1z" fill="#b0b8d8"/><path d="M9 16 L14 15 L18 28 L14 29Z" fill="#30a040"/><path d="M8 17 Q17 21 27 17 L24 30 Q17 33 11 30Z" fill="#cfe8f4" opacity="0.550" stroke="#d8ecf8" stroke-width="0.800"/></svg>
<svg style="position:absolute;left:23px;top:459px;" width="11" height="11" viewBox="0 0 11 11"><rect x="0" y="0" width="11" height="11" fill="#000"/><rect x="1" y="1" width="9" height="9" fill="#fff"/><path d="M5 3h4v4l-1.3-1.300 C6 7 5 8 4.500 9.500 L3 9 C3.500 7 4.500 5.500 6.300 4.300z" fill="#000"/></svg>
<div class="t" style="left:15px;top:471.0px;line-height:16px;font-size:12px;font-weight:normal;color:#fff;font-family:&quot;Liberation Sans&quot;,&quot;IPAGothic&quot;,sans-serif;transform:scaleX(0.9924);transform-origin:0 50%;text-shadow:1px 1px 1px rgba(0,0,0,.6);">PaintTool</div>
<svg style="position:absolute;left:22px;top:518px;" width="34" height="34" viewBox="0 0 34 34"><path d="M3 4 q0-2 2-2 h4 l2 2 h5 v2 h-13z" fill="#d8d860"/><rect x="3" y="5" width="13" height="9" fill="#e8e868"/><path d="M3.500 14.500h13.500V5" stroke="#000" stroke-width="1.200" fill="none"/><rect x="5" y="17" width="11" height="12" fill="#fff" stroke="#000"/><rect x="3" y="19" width="11" height="12" fill="#fff" stroke="#000"/><path d="M6 18.500h4" stroke="#6080c0"/></svg>
<div style="position:absolute;left:31px;top:528px;width:34px;height:16px;text-align:center;font:16px/16px &quot;Liberation Sans&quot;,sans-serif;color:#000;transform:rotate(-90deg);transform-origin:50% 50%;letter-spacing:0.5px;text-shadow:1px 0 0 #fff,-1px 0 0 #fff,0 1px 0 #fff,0 -1px 0 #fff">FTP</div>
<svg style="position:absolute;left:23px;top:540px;" width="11" height="11" viewBox="0 0 11 11"><rect x="0" y="0" width="11" height="11" fill="#000"/><rect x="1" y="1" width="9" height="9" fill="#fff"/><path d="M5 3h4v4l-1.3-1.300 C6 7 5 8 4.500 9.500 L3 9 C3.500 7 4.500 5.500 6.300 4.300z" fill="#000"/></svg>
<div class="t" style="left:16px;top:552.0px;line-height:16px;font-size:12px;font-weight:normal;color:#fff;font-family:&quot;Liberation Sans&quot;,&quot;IPAGothic&quot;,sans-serif;transform:scaleX(0.9580);transform-origin:0 50%;text-shadow:1px 1px 1px rgba(0,0,0,.6);">CuteFTP</div>
<div style="position:absolute;left:125px;top:111px;width:78px;height:151px;background:#d4d0c8;box-shadow:inset 1px 1px 0 #d4d0c8,inset -1px -1px 0 #404040,inset 2px 2px 0 #fff,inset -2px -2px 0 #808080;"></div>
<div style="position:absolute;left:129px;top:114px;width:70px;height:18px;background:linear-gradient(90deg,#808080 0%,#868686 15%,#c0c0c0 100%);"></div>
<svg style="position:absolute;left:130px;top:115px" width="16" height="16" viewBox="0 0 16 16"><rect x="1" y="0" width="14" height="16" fill="#000"/><path d="M2 1h12M2 15h12" stroke="#fff" stroke-width="1" stroke-dasharray="1 1"/><path d="M2.500 2.200 L14.500 8 L2.500 13.800Z" fill="#ffff70" stroke="#000" stroke-width="0.700"/><path d="M4.500 8h5M7 5.500v5" stroke="#000" stroke-width="1"/><path d="M0 5h3" stroke="#e00000" stroke-width="1"/><path d="M13 8h3" stroke="#e00000" stroke-width="1"/><path d="M0 12h2" stroke="#2020ff" stroke-width="1"/></svg>
<div class="t" style="left:148px;top:114.5px;line-height:17px;font-size:13px;font-weight:bold;color:#d8d8d8;font-family:&quot;Liberation Sans&quot;,&quot;IPAGothic&quot;,sans-serif;transform:scaleX(0.7949);transform-origin:0 50%;">ツール</div>
<div style="position:absolute;left:182px;top:116px;width:16px;height:14px;background:#d4d0c8;box-shadow:inset 1px 1px 0 #fff,inset -1px -1px 0 #404040,inset 2px 2px 0 #d4d0c8,inset -2px -2px 0 #808080;"></div>
<svg style="position:absolute;left:182px;top:116px;" width="16" height="14" viewBox="0 0 16 14"><path d="M4.500 3.500l7 7M11.500 3.500l-7 7" stroke="#000" stroke-width="1.700"/></svg>
<div style="position:absolute;left:129px;top:133px;width:70px;height:126px;background:#d4d0c8;box-shadow:inset 1px 1px 0 #808080;"></div>
<div style="position:absolute;left:130px;top:135px;width:69px;height:21px;background:#dcdcdc;box-shadow:inset 1px 1px 0 #fff,inset -1px -1px 0 #303030;"></div>
<div style="position:absolute;left:130px;top:156px;width:69px;height:1px;background:#404040"></div>
<svg style="position:absolute;left:137px;top:136px;" width="24" height="20" viewBox="0 0 24 20"><path d="M3 17 L13 6" stroke="#707070" stroke-width="2.600"/><path d="M12 2.500 q4-2 6 1.500 l-3 0.500 -0.500 3 q-4 1-5-2z" fill="#707070"/><path d="M1 16 l2.500 2.500 M0.500 18.500 l3-1" stroke="#707070" stroke-width="2"/><path d="M4 3 L10 9" stroke="#606060" stroke-width="2.200"/><path d="M10 9 L17 16.500" stroke="#f07818" stroke-width="3"/><path d="M10 9 L17 16.500" stroke="#ffe0a0" stroke-width="0.800"/></svg>
<div style="position:absolute;left:162px;top:139px;width:29px;height:13px;background:#a8a8a8;box-shadow:inset 1px 1px 0 #808080,inset -1px -1px 0 #e0e0e0;"></div>
<div style="position:absolute;left:165px;top:141px;width:23px;height:9px;background:linear-gradient(180deg,#2e6a2e,#0f3d0f);"></div>
<div style="position:absolute;left:166px;top:142px;width:10px;height:3px;background:#5c9a5c;opacity:.7"></div>
<div style="position:absolute;left:130px;top:157px;width:23px;height:22px;background:#808080;box-shadow:inset 1px 1px 0 #404040,inset -1px -1px 0 #e8e8e8;"></div>
<div style="position:absolute;left:153px;top:157px;width:23px;height:22px;background:#dcdcdc;box-shadow:inset 1px 1px 0 #fff,inset -1px -1px 0 #303030;"></div>
<div style="position:absolute;left:176px;top:157px;width:23px;height:22px;background:#dcdcdc;box-shadow:inset 1px 1px 0 #fff,inset -1px -1px 0 #303030;"></div>
<div style="position:absolute;left:130px;top:179px;width:23px;height:22px;background:#dcdcdc;box-shadow:inset 1px 1px 0 #fff,inset -1px -1px 0 #303030;"></div>
<div style="position:absolute;left:153px;top:179px;width:23px;height:22px;background:#dcdcdc;box-shadow:inset 1px 1px 0 #fff,inset -1px -1px 0 #303030;"></div>
<div style="position:absolute;left:176px;top:179px;width:23px;height:22px;background:#dcdcdc;box-shadow:inset 1px 1px 0 #fff,inset -1px -1px 0 #303030;"></div>
<div style="position:absolute;left:130px;top:201px;width:23px;height:22px;background:#dcdcdc;box-shadow:inset 1px 1px 0 #fff,inset -1px -1px 0 #303030;"></div>
<div style="position:absolute;left:153px;top:201px;width:23px;height:22px;background:#dcdcdc;box-shadow:inset 1px 1px 0 #fff,inset -1px -1px 0 #303030;"></div>
<div style="position:absolute;left:176px;top:201px;width:23px;height:22px;background:#dcdcdc;box-shadow:inset 1px 1px 0 #fff,inset -1px -1px 0 #303030;"></div>
<svg style="position:absolute;left:130px;top:157px;" width="23" height="22" viewBox="0 0 23 22"><path d="M8 18 L5 12 q-1-2 1-2 l2 2 V4.500 q1.200-1.500 2.400 0 V9 q1.200-1.300 2.400 0 q1.200-1.200 2.400 0.300 q1.200-1 2.200 0.500 V15 l-1.500 3.500z" fill="#ffd8b0" stroke="#000" stroke-width="0.900"/></svg>
<svg style="position:absolute;left:153px;top:157px;" width="23" height="22" viewBox="0 0 23 22"><path d="M8 4 V16 L10.800 13.300 L13 18 L15 17 L12.800 12.500 H16.500Z" fill="#fff" stroke="#000" stroke-width="1"/></svg>
<div class="s" style="left:179px;top:156px;font:normal 21px/22px &quot;Liberation Sans&quot;,sans-serif;color:#000;font-family:&quot;Liberation Serif&quot;,serif;line-height:24px;">A</div>
<svg style="position:absolute;left:176px;top:157px;" width="23" height="22" viewBox="0 0 23 22"><path d="M19.500 4v14M18 4h3M18 18h3" stroke="#000" stroke-width="0.900" stroke-dasharray="1 1"/></svg>
<svg style="position:absolute;left:130px;top:179px;" width="23" height="22" viewBox="0 0 23 22"><path d="M5 7 L12 3 L19 12 L12 18Z" fill="#7a5a3a" stroke="#000" stroke-width="0.800"/><path d="M7 8l7 8M9 6.500l7 8M11 5l7 8" stroke="#c8a070" stroke-width="0.800"/><path d="M3 7 l4-2.500 M12 18.500 l7-5.500" stroke="#000" stroke-width="2"/><path d="M2 3 q3 0 4 3" stroke="#000" fill="none"/></svg>
<svg style="position:absolute;left:153px;top:179px;" width="23" height="22" viewBox="0 0 23 22"><path d="M4 2 V10.500 L6.200 8.500 L7.800 12 L9.500 11.200 L7.800 8 H10.500Z" fill="#000"/><rect x="9.500" y="9.500" width="10" height="9" fill="#fff" stroke="#000"/><path d="M11.500 12.500h6M11.500 14.500h6M11.500 16.500h6" stroke="#000" stroke-width="1" shape-rendering="crispEdges"/></svg>
<svg style="position:absolute;left:176px;top:179px;" width="23" height="22" viewBox="0 0 23 22"><path d="M8 19 L4.500 12 q-0.500-2.500 1.500-2 l1.500 2 L6.500 6 q1-2 2.300-0.200 L9.500 9 L9.700 4 q1.200-1.600 2.400 0 L12.300 9 L13.500 4.800 q1.400-1.300 2.300 0.400 L15 10 L17 7.500 q1.600-0.600 1.600 1 L16.500 15 L15.500 19z" fill="#ffd8b0" stroke="#000" stroke-width="0.900"/></svg>
<svg style="position:absolute;left:130px;top:201px;" width="23" height="22" viewBox="0 0 23 22"><path d="M8 4.500h7.500l4 4v7l-4 4H8l-4-4v-7z" fill="#fff" stroke="#000" stroke-width="0.800"/><path d="M8.800 6.300h6l3.400 3.400v5.600l-3.400 3.400h-6l-3.400-3.400V9.700z" fill="#f00000"/><path d="M2 2l3 3M2 2h2.500M2 2v2.500" stroke="#000" stroke-width="0.900" fill="none"/></svg>
<svg style="position:absolute;left:153px;top:201px;" width="23" height="22" viewBox="0 0 23 22"><path d="M3 11.500h17" stroke="#000" stroke-width="1"/><path d="M3 11.500l2.500-2M3 11.500l2.500 2" stroke="#000"/><circle cx="12" cy="11.500" r="4.500" fill="#ffff20" stroke="#000"/></svg>
<div class="s" style="left:162.4px;top:208px;font:bold 8px/9px &quot;Liberation Sans&quot;,sans-serif;color:#000;">P</div>
<svg style="position:absolute;left:176px;top:201px;" width="23" height="22" viewBox="0 0 23 22"><path d="M4 19 L6 14 L14 6 L17 9 L9 17Z" fill="#e8f8ff" stroke="#000" stroke-width="0.900"/><path d="M13 5 L18 10" stroke="#000" stroke-width="2"/><path d="M15 6 L18 2.500 q2.500-0.500 2 2 L17.500 8.500z" fill="#e02020" stroke="#800" stroke-width="0.600"/><path d="M7 15l6-6" stroke="#60c0e8" stroke-width="1.500"/></svg>
<div style="position:absolute;left:130px;top:223px;width:69px;height:35px;background:#dcdcdc;box-shadow:inset 1px 1px 0 #fff,inset -1px -1px 0 #303030;"></div>
<div style="position:absolute;left:146px;top:238px;width:19px;height:17px;background:#000"></div>
<div style="position:absolute;left:145px;top:237px;width:19px;height:17px;background:#b4b4b4;box-shadow:inset 1px 1px 0 #e4e4e4,inset -1px -1px 0 #606060;"></div>
<div style="position:absolute;left:134px;top:227px;width:20px;height:17px;background:#000"></div>
<div style="position:absolute;left:133px;top:226px;width:20px;height:17px;background:#b4b4b4;box-shadow:inset 1px 1px 0 #e4e4e4,inset -1px -1px 0 #606060;"></div>
<svg style="position:absolute;left:170px;top:228px;" width="28" height="28" viewBox="0 0 28 28"><path d="M23 3 L25 5 L14 16 L12 14Z" fill="#c89060" stroke="#705030" stroke-width="0.500"/><path d="M13 13 L15.500 15.500 L11 21 L6 23 L8 18Z" fill="#000"/><path d="M7 20 L9 22 L3.500 24Z" fill="#f0e020"/></svg>
<div style="position:absolute;left:67px;top:329px;width:136px;height:266px;background:#d4d0c8;box-shadow:inset 1px 1px 0 #d4d0c8,inset -1px -1px 0 #404040,inset 2px 2px 0 #fff,inset -2px -2px 0 #808080;"></div>
<div style="position:absolute;left:71px;top:332px;width:128px;height:18px;background:linear-gradient(90deg,#808080 0%,#868686 15%,#c0c0c0 100%);"></div>
<svg style="position:absolute;left:72px;top:333px" width="16" height="16" viewBox="0 0 16 16"><rect x="1" y="0" width="14" height="16" fill="#000"/><path d="M2 1h12M2 15h12" stroke="#fff" stroke-width="1" stroke-dasharray="1 1"/><path d="M2.500 2.200 L14.500 8 L2.500 13.800Z" fill="#ffff70" stroke="#000" stroke-width="0.700"/><path d="M4.500 8h5M7 5.500v5" stroke="#000" stroke-width="1"/><path d="M0 5h3" stroke="#e00000" stroke-width="1"/><path d="M13 8h3" stroke="#e00000" stroke-width="1"/><path d="M0 12h2" stroke="#2020ff" stroke-width="1"/></svg>
<div class="t" style="left:90px;top:333.0px;line-height:17px;font-size:13px;font-weight:bold;color:#d8d8d8;font-family:&quot;Liberation Sans&quot;,&quot;IPAGothic&quot;,sans-serif;transform:scaleX(0.9744);transform-origin:0 50%;">制御器</div>
<div style="position:absolute;left:183px;top:334px;width:16px;height:14px;background:#d4d0c8;box-shadow:inset 1px 1px 0 #fff,inset -1px -1px 0 #404040,inset 2px 2px 0 #d4d0c8,inset -2px -2px 0 #808080;"></div>
<svg style="position:absolute;left:183px;top:334px;" width="16" height="14" viewBox="0 0 16 14"><path d="M4.500 3.500l7 7M11.500 3.500l-7 7" stroke="#000" stroke-width="1.700"/></svg>
<div style="position:absolute;left:71px;top:353px;width:34px;height:27px;background:#d4d0c8;box-shadow:inset 1px 1px 0 #fff;"></div>
<div style="position:absolute;left:106px;top:353px;width:33px;height:27px;background:#dcd9d2;box-shadow:inset 1px 1px 0 #fff,inset -1px -1px 0 #404040,inset 2px 2px 0 #d4d0c8,inset -2px -2px 0 #808080;"></div>
<div style="position:absolute;left:139px;top:353px;width:33px;height:27px;background:#dcd9d2;box-shadow:inset 1px 1px 0 #fff,inset -1px -1px 0 #404040,inset 2px 2px 0 #d4d0c8,inset -2px -2px 0 #808080;"></div>
<div style="position:absolute;left:172px;top:353px;width:27px;height:27px;background:#d4d0c8;box-shadow:inset 1px 1px 0 #fff,inset -1px -1px 0 #808080;"></div>
<svg style="position:absolute;left:71px;top:353px;" width="34" height="27" viewBox="0 0 34 27"><path d="M17 7 L23 13.500 H20 V20 H14 V13.500 H11Z" fill="#e8e8f0" stroke="#909098" stroke-width="1.200"/></svg>
<svg style="position:absolute;left:106px;top:353px;" width="33" height="27" viewBox="0 0 33 27"><path d="M18 15 L24 21" stroke="#604020" stroke-width="2.600"/><path d="M18 15 L24 21" stroke="#e0a860" stroke-width="1"/><circle cx="14" cy="11" r="5.500" fill="#d0d4ff" stroke="#303060" stroke-width="1.300"/><circle cx="12.500" cy="9.500" r="2" fill="#f4f4ff"/></svg>
<svg style="position:absolute;left:139px;top:353px;" width="33" height="27" viewBox="0 0 33 27"><circle cx="11.500" cy="10" r="2" fill="#8080e0" stroke="#000" stroke-width="0.800"/><circle cx="11.500" cy="18" r="2" fill="#fff" stroke="#000" stroke-width="0.800"/><path d="M15 10.500 l1.500-1.500 1.500 1.500 1.500-1.500 1.500 1.500 1.500-1.500 M15 18.500 l1.500-1.500 1.500 1.500 1.500-1.500 1.500 1.500 1.500-1.500" stroke="#000" stroke-width="0.900" fill="none"/></svg>
<div style="position:absolute;left:72px;top:381px;width:127px;height:207px;background:#d4d0c8;box-shadow:inset 1px 1px 0 #fff,inset -1px -1px 0 #808080;"></div>
<div style="position:absolute;left:71px;top:588px;width:128px;height:2px;background:#404040"></div>
<div style="position:absolute;left:79px;top:400px;width:36px;height:36px;background:#d4d0c8;box-shadow:inset 1px 1px 0 #fff,inset -1px -1px 0 #808080;"></div>
<div style="position:absolute;left:116px;top:400px;width:36px;height:36px;background:#d4d0c8;box-shadow:inset 1px 1px 0 #fff,inset -1px -1px 0 #808080;"></div>
<div style="position:absolute;left:153px;top:400px;width:36px;height:36px;background:#d4d0c8;box-shadow:inset 1px 1px 0 #fff,inset -1px -1px 0 #808080;"></div>
<div style="position:absolute;left:79px;top:437px;width:36px;height:36px;background:#d4d0c8;box-shadow:inset 1px 1px 0 #fff,inset -1px -1px 0 #808080;"></div>
<div style="position:absolute;left:116px;top:437px;width:36px;height:36px;background:#d4d0c8;box-shadow:inset 1px 1px 0 #fff,inset -1px -1px 0 #808080;"></div>
<div style="position:absolute;left:153px;top:437px;width:36px;height:36px;background:#d4d0c8;box-shadow:inset 1px 1px 0 #fff,inset -1px -1px 0 #808080;"></div>
<div style="position:absolute;left:79px;top:474px;width:36px;height:36px;background:#d4d0c8;box-shadow:inset 1px 1px 0 #fff,inset -1px -1px 0 #808080;"></div>
<div style="position:absolute;left:116px;top:474px;width:36px;height:36px;background:#d4d0c8;box-shadow:inset 1px 1px 0 #fff,inset -1px -1px 0 #808080;"></div>
<div style="position:absolute;left:153px;top:474px;width:36px;height:36px;background:#d4d0c8;box-shadow:inset 1px 1px 0 #fff,inset -1px -1px 0 #808080;"></div>
<div style="position:absolute;left:79px;top:511px;width:36px;height:36px;background:#d4d0c8;box-shadow:inset 1px 1px 0 #fff,inset -1px -1px 0 #808080;"></div>
<div style="position:absolute;left:116px;top:511px;width:36px;height:36px;background:#d4d0c8;box-shadow:inset 1px 1px 0 #fff,inset -1px -1px 0 #808080;"></div>
<div style="position:absolute;left:153px;top:511px;width:36px;height:36px;background:#d4d0c8;box-shadow:inset 1px 1px 0 #fff,inset -1px -1px 0 #808080;"></div>
<div style="position:absolute;left:79px;top:548px;width:36px;height:36px;background:#d4d0c8;box-shadow:inset 1px 1px 0 #fff,inset -1px -1px 0 #808080;"></div>
<div style="position:absolute;left:116px;top:548px;width:36px;height:36px;background:#d4d0c8;box-shadow:inset 1px 1px 0 #fff,inset -1px -1px 0 #808080;"></div>
<div style="position:absolute;left:153px;top:548px;width:36px;height:36px;background:#d4d0c8;box-shadow:inset 1px 1px 0 #fff,inset -1px -1px 0 #808080;"></div>
<svg style="position:absolute;left:108px;top:403px;" width="5" height="8" viewBox="0 0 5 8"><path d="M0 0v8l4.500-4z" fill="#000"/></svg>
<svg style="position:absolute;left:145px;top:403px;" width="5" height="8" viewBox="0 0 5 8"><path d="M0 0v8l4.500-4z" fill="#000"/></svg>
<svg style="position:absolute;left:182px;top:403px;" width="5" height="8" viewBox="0 0 5 8"><path d="M0 0v8l4.500-4z" fill="#000"/></svg>
<svg style="position:absolute;left:108px;top:440px;" width="5" height="8" viewBox="0 0 5 8"><path d="M0 0v8l4.500-4z" fill="#000"/></svg>
<svg style="position:absolute;left:145px;top:440px;" width="5" height="8" viewBox="0 0 5 8"><path d="M0 0v8l4.500-4z" fill="#000"/></svg>
<svg style="position:absolute;left:182px;top:440px;" width="5" height="8" viewBox="0 0 5 8"><path d="M0 0v8l4.500-4z" fill="#000"/></svg>
<svg style="position:absolute;left:108px;top:477px;" width="5" height="8" viewBox="0 0 5 8"><path d="M0 0v8l4.500-4z" fill="#000"/></svg>
<svg style="position:absolute;left:145px;top:477px;" width="5" height="8" viewBox="0 0 5 8"><path d="M0 0v8l4.500-4z" fill="#000"/></svg>
<svg style="position:absolute;left:182px;top:477px;" width="5" height="8" viewBox="0 0 5 8"><path d="M0 0v8l4.500-4z" fill="#000"/></svg>
<svg style="position:absolute;left:108px;top:514px;" width="5" height="8" viewBox="0 0 5 8"><path d="M0 0v8l4.500-4z" fill="#000"/></svg>
<svg style="position:absolute;left:145px;top:514px;" width="5" height="8" viewBox="0 0 5 8"><path d="M0 0v8l4.500-4z" fill="#000"/></svg>
<svg style="position:absolute;left:182px;top:514px;" width="5" height="8" viewBox="0 0 5 8"><path d="M0 0v8l4.500-4z" fill="#000"/></svg>
<svg style="position:absolute;left:108px;top:551px;" width="5" height="8" viewBox="0 0 5 8"><path d="M0 0v8l4.500-4z" fill="#000"/></svg>
<svg style="position:absolute;left:182px;top:551px;" width="5" height="8" viewBox="0 0 5 8"><path d="M0 0v8l4.500-4z" fill="#000"/></svg>
<svg style="position:absolute;left:79px;top:400px;" width="36" height="36" viewBox="0 0 36 36"><rect x="4" y="4" width="4.500" height="25" rx="2.200" fill="#c8c8c8" stroke="#707070" stroke-width="0.800"/><rect x="4.300" y="16" width="3.900" height="12.500" rx="1.800" fill="#e02828"/><path d="M2 7h2M2 27h2" stroke="#000"/><rect x="11" y="17" width="19" height="12" fill="#b8b8b8"/><rect x="12.500" y="18.500" width="16" height="9" fill="#fff"/></svg>
<div class="s" style="left:92px;top:418px;font:normal 9px/10px &quot;Liberation Sans&quot;,sans-serif;color:#000;">1.23</div>
<svg style="position:absolute;left:116px;top:400px;" width="36" height="36" viewBox="0 0 36 36"><defs><radialGradient id="led"><stop offset="0" stop-color="#60ff60"/><stop offset="0.700" stop-color="#18d830"/><stop offset="1" stop-color="#909090"/></radialGradient></defs><path d="M4 7 q3-3 5.500 0 L11 20 L7 22 L3 19z" fill="#c0c0c0" stroke="#808080" stroke-width="0.800"/><path d="M7 21 L12 28 L14 26 L10 18z" fill="#888"/><circle cx="24" cy="21" r="6.800" fill="url(#led)"/></svg>
<svg style="position:absolute;left:153px;top:400px;" width="36" height="36" viewBox="0 0 36 36"><rect x="2" y="3" width="22" height="13" fill="#b0b0b0"/><rect x="4" y="5" width="18" height="9" fill="#fff"/><rect x="2" y="19" width="24" height="14" fill="#b0b0b0"/><rect x="4" y="21" width="20" height="10" fill="#fff"/></svg>
<div class="s" style="left:159px;top:404px;font:normal 9px/10px &quot;Liberation Sans&quot;,sans-serif;color:#000;">abc</div>
<div class="s" style="left:158px;top:421px;font:normal 9px/10px &quot;Liberation Sans&quot;,sans-serif;color:#000;">Path</div>
<svg style="position:absolute;left:79px;top:437px;" width="36" height="36" viewBox="0 0 36 36"><g fill="#fff" stroke="#000" stroke-width="0.900"><rect x="2.500" y="2.500" width="5" height="7"/><rect x="7.500" y="2.500" width="7" height="7"/><rect x="14.500" y="2.500" width="7" height="7"/><rect x="7.500" y="9.500" width="7" height="7"/><rect x="14.500" y="9.500" width="7" height="7"/><rect x="17.500" y="21.500" width="14" height="11"/></g><rect x="20" y="24" width="4" height="2" fill="#20a040" stroke="#000" stroke-width="0.500"/><rect x="20" y="28" width="5" height="3" fill="#2060e0" stroke="#000" stroke-width="0.500"/><rect x="26.500" y="24" width="3" height="5" fill="#e02020" stroke="#000" stroke-width="0.500"/></svg>
<div class="s" style="left:82.5px;top:439px;font:bold 7px/8px &quot;Liberation Sans&quot;,sans-serif;color:#000;">i</div>
<div class="s" style="left:88px;top:439px;font:bold 7px/8px &quot;Liberation Sans&quot;,sans-serif;color:#000;">1</div>
<div class="s" style="left:95px;top:439px;font:bold 7px/8px &quot;Liberation Sans&quot;,sans-serif;color:#000;">2</div>
<div class="s" style="left:88px;top:446px;font:bold 7px/8px &quot;Liberation Sans&quot;,sans-serif;color:#000;">3</div>
<div class="s" style="left:95px;top:446px;font:bold 7px/8px &quot;Liberation Sans&quot;,sans-serif;color:#000;">4</div>
<svg style="position:absolute;left:116px;top:437px;" width="36" height="36" viewBox="0 0 36 36"><rect x="2.500" y="2.500" width="24" height="16" fill="#fff" stroke="#000"/><rect x="4" y="4" width="21" height="7" fill="#1018a0"/><path d="M15 12.500v5" stroke="#000" stroke-width="1.500" stroke-dasharray="1 1"/><rect x="4" y="22" width="25" height="11" fill="#fff" stroke="#000" stroke-width="0.800"/><rect x="4" y="22" width="25" height="3.500" fill="#a0a0a0"/><path d="M4 25.500h25M4 29.500h25M10.500 22v11M16.500 22v11M22.500 22v11" stroke="#000" stroke-width="1" shape-rendering="crispEdges"/></svg>
<div class="s" style="left:121.5px;top:440.5px;font:bold 7px/8px &quot;Liberation Sans&quot;,sans-serif;color:#fff;letter-spacing:1px">LIST</div>
<svg style="position:absolute;left:153px;top:437px;" width="36" height="36" viewBox="0 0 36 36"><rect x="2" y="6" width="28" height="27" fill="#a0a0a0"/><path d="M2.500 33V6.500H30" stroke="#e8e8e8" fill="none"/><path d="M2.500 33.500H30.500V6" stroke="#404040" fill="none"/><rect x="10" y="9" width="17" height="15" fill="#000"/><path d="M12 16 q3-11 6.500 0 t6.500 0" stroke="#30e040" fill="none" stroke-width="1.200"/></svg>
<div class="s" style="left:157px;top:445px;font:bold 6px/7px &quot;Liberation Sans&quot;,sans-serif;color:#000;">2</div>
<div class="s" style="left:157px;top:451px;font:bold 6px/7px &quot;Liberation Sans&quot;,sans-serif;color:#000;">1</div>
<div class="s" style="left:157px;top:457px;font:bold 6px/7px &quot;Liberation Sans&quot;,sans-serif;color:#000;">0</div>
<div class="s" style="left:163px;top:462.5px;font:bold 6px/7px &quot;Liberation Sans&quot;,sans-serif;color:#000;letter-spacing:-0.300px">0.0 1.0</div>
<div style="position:absolute;left:81px;top:477px;width:25px;height:10px;background:#d0d0d0;box-shadow:inset 1px 1px 0 #fff,inset -1px -1px 0 #000,1px 1px 0 #000;"></div>
<div class="s" style="left:82.5px;top:477px;font:bold 7.5px/8.5px &quot;Liberation Sans&quot;,sans-serif;color:#000;letter-spacing:-0.3px">Ring</div>
<svg style="position:absolute;left:98px;top:479px;" width="8" height="6" viewBox="0 0 8 6"><path d="M0 0h7l-3.500 4.500z" fill="#707070"/></svg>
<div style="position:absolute;left:86px;top:494px;width:24px;height:11px;background:#d0d0d0;box-shadow:inset 1px 1px 0 #fff,inset -1px -1px 0 #000,1px 1px 0 #000;"></div>
<div class="s" style="left:87.5px;top:495px;font:bold 7.5px/8.5px &quot;Liberation Sans&quot;,sans-serif;color:#000;letter-spacing:-0.4px">Enum</div>
<svg style="position:absolute;left:104px;top:497px;" width="7" height="5" viewBox="0 0 7 5"><path d="M0 0h6l-3 4z" fill="#707070"/></svg>
<svg style="position:absolute;left:80px;top:493px;" width="7" height="14" viewBox="0 0 7 14"><rect x="0.500" y="0.500" width="5" height="12" rx="2" fill="#e0e0e0" stroke="#000" stroke-width="0.800"/><path d="M0.500 6.500h5" stroke="#000" stroke-width="0.800"/></svg>
<svg style="position:absolute;left:116px;top:474px;" width="36" height="36" viewBox="0 0 36 36"><rect x="5" y="3" width="8" height="6" fill="#fff" stroke="#000" stroke-width="1"/><rect x="6.500" y="4.500" width="5" height="3" fill="#000"/><path d="M3.500 11.500h11" stroke="#000" stroke-width="2"/><path d="M16 12l5 5M16 12h2.500M16 12v2.500M21 17h-2.500M21 17v-2.500" stroke="#000" stroke-width="0.900" fill="none"/><rect x="10.500" y="20.500" width="20" height="11" fill="#fff" stroke="#000"/><path d="M13 29h3v-6h3v6h3v-6h3v6h3" stroke="#1020c0" stroke-width="1.200" fill="none"/></svg>
<svg style="position:absolute;left:153px;top:474px;" width="36" height="36" viewBox="0 0 36 36"><path d="M7.500 6.500H17L23 12.500V28.500H7.500Z" fill="#c4c4c4" stroke="#000" stroke-width="1.200"/><path d="M17 6.500V12.500H23" fill="#e4e4e4" stroke="#000" stroke-width="0.800"/></svg>
<div class="s" style="left:163.5px;top:487px;font:bold 14px/15px &quot;Liberation Sans&quot;,sans-serif;color:#303030;">#</div>
<svg style="position:absolute;left:79px;top:511px;" width="36" height="36" viewBox="0 0 36 36"><path d="M3.500 11 L5 7.500 H12 L13.500 10.500 H31.500 V32.500 H3.500Z" fill="#ffffd0" stroke="#000" stroke-width="1.200"/><path d="M5 7.500H12L13 9.500H4.200z" fill="#c8c8a0"/><path d="M14 10.500 L29 10.500" stroke="#000" stroke-width="1.500"/><rect x="6.500" y="15.500" width="22" height="14" fill="#d0d0d0" stroke="#000" stroke-width="0.800"/><rect x="7" y="16" width="21" height="3" fill="#1020a0"/><rect x="10" y="21" width="15" height="3.500" fill="#fff"/><rect x="10" y="26" width="5" height="2" fill="#909090"/><rect x="20" y="26" width="5" height="2" fill="#909090"/></svg>
<svg style="position:absolute;left:116px;top:511px;" width="36" height="36" viewBox="0 0 36 36"><path d="M3.500 11 L5 7.500 H12 L13.500 10.500 H31.500 V32.500 H3.500Z" fill="#ffffd0" stroke="#000" stroke-width="1.200"/><path d="M5 7.500H12L13 9.500H4.200z" fill="#c8c8a0"/><path d="M14 10.500 L29 10.500" stroke="#000" stroke-width="1.500"/><circle cx="11.500" cy="18" r="3" fill="#f0c0c0" stroke="#000" stroke-width="0.800"/><path d="M11.500 18l1.500-2" stroke="#c00000"/><path d="M6.500 18h1M16 18h1M11.500 13v1M8 14.500l.7.700M15 14.500l-.7.700" stroke="#000" stroke-width="0.800"/><circle cx="24.500" cy="18" r="3.200" fill="#20a040" stroke="#000" stroke-width="0.800"/><circle cx="24.500" cy="18" r="1.500" fill="#80e090"/><rect x="7.500" y="24" width="8.500" height="6" fill="#606060" stroke="#000" stroke-width="0.700" stroke-dasharray="1 1"/><path d="M18.500 25h2M18.500 27h2M18.500 29h2" stroke="#000" stroke-width="0.800"/><rect x="22" y="23.500" width="5" height="7.500" rx="1.500" fill="#fff" stroke="#000" stroke-width="0.800"/><path d="M22.200 27.500h4.600v2q0 1.500-1.500 1.500h-1.600q-1.500 0-1.500-1.500z" fill="#102080"/></svg>
<svg style="position:absolute;left:153px;top:511px;" width="36" height="36" viewBox="0 0 36 36"><rect x="1.500" y="1.500" width="20" height="15" fill="#d8d8d8" stroke="#000" stroke-width="0.900"/><rect x="2" y="2" width="19" height="3" fill="#1020c0"/><path d="M3 3.500h2M18 3.500h2" stroke="#ffe040" stroke-width="1.500"/><rect x="7" y="7" width="8" height="7" fill="#fff" stroke="#000" stroke-width="0.800"/><path d="M9 8.500l4 4M13 8.500l-4 4" stroke="#000" stroke-width="1.600"/><path d="M20 10 H27 q2 0 2 2 V15" stroke="#808080" stroke-width="3" fill="none"/><path d="M26 14.500h6l-3 3.500z" fill="#000"/><rect x="2.500" y="20.500" width="30" height="11.500" rx="4" fill="#ffffd0" stroke="#000" stroke-width="1"/></svg>
<div class="s" style="left:157.5px;top:532.5px;font:normal 9.5px/10.5px &quot;Liberation Sans&quot;,sans-serif;color:#000;letter-spacing:-0.300px">A<span style="font-size:6.5px">CTIVE</span>X</div>
<svg style="position:absolute;left:79px;top:548px;" width="36" height="36" viewBox="0 0 36 36"><rect x="5" y="5" width="10" height="10" fill="#c8c8c8"/><path d="M5.500 15V5.500H15" stroke="#fff" fill="none"/><path d="M5.500 15.500H15.500V5" stroke="#505050" fill="none"/><path d="M18 5l10 10" stroke="#000" stroke-width="0.900"/><rect x="5" y="20" width="11" height="11" rx="3" fill="#c8c8c8" stroke="#505050" stroke-width="1"/><rect x="19.500" y="20.500" width="10" height="10" fill="#fff" stroke="#505050" stroke-width="0.800"/></svg>
<svg style="position:absolute;left:116px;top:548px;" width="36" height="36" viewBox="0 0 36 36"><path d="M9 5.500H24 q5 0 5 5V19 q0 5-5 5H12 L7 27 L8.500 23.500 Q4.500 22.500 4.500 19V10.500 q0-5 4.500-5z" fill="#e8e8e8" stroke="#000" stroke-width="1"/><path d="M11.500 8.500H19L22.500 12V22.500H11.500Z" fill="#fff" stroke="#000" stroke-width="0.900"/><path d="M17 10v11" stroke="#000" stroke-width="1" stroke-dasharray="1.500 1"/><path d="M14 15.500h6" stroke="#000" stroke-width="0.800"/><path d="M18 27.500h2M21.500 27.500h2M25 27.500h2" stroke="#000" stroke-width="2"/></svg>
<svg style="position:absolute;left:153px;top:548px;" width="36" height="36" viewBox="0 0 36 36"><rect x="3" y="4" width="3.500" height="9" fill="#e0e0e0" stroke="#404040" stroke-width="0.500"/><rect x="7" y="6" width="4.500" height="7" fill="#804020"/><path d="M13.500 4 L16.500 2.500 L21 12 L18 13Z" fill="#f0e080" stroke="#806000" stroke-width="0.500"/><rect x="22.500" y="5" width="3.500" height="8" fill="#208040"/><rect x="2" y="13.500" width="30" height="2.200" fill="#a09030" stroke="#403000" stroke-width="0.500"/><rect x="3.500" y="22" width="3.500" height="7" fill="#2060e0"/><rect x="7.500" y="20.500" width="4.500" height="8.500" fill="#c02020"/><path d="M15 27 L19 20 L22 21.500 L18 29Z" fill="#208040"/><rect x="23" y="22" width="3" height="7" fill="#804020"/><rect x="26.500" y="20" width="3" height="9" fill="#e8e8e8" stroke="#404040" stroke-width="0.500"/><rect x="2" y="29.500" width="30" height="2.200" fill="#a09030" stroke="#403000" stroke-width="0.500"/></svg>
<div style="position:absolute;left:213px;top:46px;width:790px;height:538px;background:#d4d0c8;box-shadow:inset 1px 1px 0 #d4d0c8,inset -1px -1px 0 #404040,inset 2px 2px 0 #fff,inset -2px -2px 0 #808080;"></div>
<div style="position:absolute;left:217px;top:50px;width:782px;height:18px;background:linear-gradient(90deg,#0a246a 0%,#0a246a 8%,#a6caf0 100%);"></div>
<svg style="position:absolute;left:219px;top:51px" width="16" height="16" viewBox="0 0 16 16"><rect x="1" y="0" width="14" height="16" fill="#000"/><path d="M2 1h12M2 15h12" stroke="#fff" stroke-width="1" stroke-dasharray="1 1"/><path d="M2.500 2.200 L14.500 8 L2.500 13.800Z" fill="#ffff70" stroke="#000" stroke-width="0.700"/><path d="M4.500 8h5M7 5.500v5" stroke="#000" stroke-width="1"/><path d="M0 5h3" stroke="#e00000" stroke-width="1"/><path d="M13 8h3" stroke="#e00000" stroke-width="1"/><path d="M0 12h2" stroke="#2020ff" stroke-width="1"/></svg>
<div class="t" style="left:237px;top:50.5px;line-height:17px;font-size:13px;font-weight:bold;color:#fff;font-family:&quot;Liberation Sans&quot;,&quot;IPAGothic&quot;,sans-serif;transform:scaleX(1.0104);transform-origin:0 50%;">tester01.vi</div>
<div style="position:absolute;left:948px;top:52px;width:16px;height:14px;background:#d4d0c8;box-shadow:inset 1px 1px 0 #fff,inset -1px -1px 0 #404040,inset 2px 2px 0 #d4d0c8,inset -2px -2px 0 #808080;"></div>
<div style="position:absolute;left:964px;top:52px;width:16px;height:14px;background:#d4d0c8;box-shadow:inset 1px 1px 0 #fff,inset -1px -1px 0 #404040,inset 2px 2px 0 #d4d0c8,inset -2px -2px 0 #808080;"></div>
<div style="position:absolute;left:982px;top:52px;width:16px;height:14px;background:#d4d0c8;box-shadow:inset 1px 1px 0 #fff,inset -1px -1px 0 #404040,inset 2px 2px 0 #d4d0c8,inset -2px -2px 0 #808080;"></div>
<svg style="position:absolute;left:948px;top:52px;" width="16" height="14" viewBox="0 0 16 14"><rect x="4" y="9" width="6" height="2" fill="#000"/></svg>
<svg style="position:absolute;left:964px;top:52px;" width="16" height="14" viewBox="0 0 16 14"><rect x="3.5" y="2.5" width="8" height="8" fill="none" stroke="#000"/><rect x="3" y="2" width="9" height="2" fill="#000"/></svg>
<svg style="position:absolute;left:982px;top:52px;" width="16" height="14" viewBox="0 0 16 14"><path d="M4 3l7 7M11 3l-7 7" stroke="#000" stroke-width="1.6"/></svg>
<div class="t" style="left:222px;top:71.0px;line-height:16px;font-size:12px;font-weight:normal;color:#000;font-family:&quot;Liberation Sans&quot;,&quot;IPAGothic&quot;,sans-serif;transform:scaleX(0.7893);transform-origin:0 50%;">ファイル(<u>F</u>)</div>
<div class="t" style="left:281px;top:71.0px;line-height:16px;font-size:12px;font-weight:normal;color:#000;font-family:&quot;Liberation Sans&quot;,&quot;IPAGothic&quot;,sans-serif;transform:scaleX(0.9746);transform-origin:0 50%;">編集(<u>E</u>)</div>
<div class="t" style="left:329px;top:71.0px;line-height:16px;font-size:12px;font-weight:normal;color:#000;font-family:&quot;Liberation Sans&quot;,&quot;IPAGothic&quot;,sans-serif;transform:scaleX(0.9675);transform-origin:0 50%;">操作(<u>O</u>)</div>
<div class="t" style="left:377px;top:71.0px;line-height:16px;font-size:12px;font-weight:normal;color:#000;font-family:&quot;Liberation Sans&quot;,&quot;IPAGothic&quot;,sans-serif;transform:scaleX(0.8764);transform-origin:0 50%;">ツール(<u>T</u>)</div>
<div class="t" style="left:431px;top:71.0px;line-height:16px;font-size:12px;font-weight:normal;color:#000;font-family:&quot;Liberation Sans&quot;,&quot;IPAGothic&quot;,sans-serif;transform:scaleX(0.9746);transform-origin:0 50%;">参照(<u>B</u>)</div>
<div class="t" style="left:479px;top:71.0px;line-height:16px;font-size:12px;font-weight:normal;color:#000;font-family:&quot;Liberation Sans&quot;,&quot;IPAGothic&quot;,sans-serif;transform:scaleX(0.7564);transform-origin:0 50%;">ウィンドウ(<u>W</u>)</div>
<div class="t" style="left:549px;top:71.0px;line-height:16px;font-size:12px;font-weight:normal;color:#000;font-family:&quot;Liberation Sans&quot;,&quot;IPAGothic&quot;,sans-serif;transform:scaleX(0.8543);transform-origin:0 50%;">ヘルプ(<u>H</u>)</div>
<div style="position:absolute;left:217px;top:87px;width:747px;height:1px;background:#808080"></div>
<div style="position:absolute;left:217px;top:88px;width:747px;height:1px;background:#fff"></div>
<div style="position:absolute;left:249px;top:90px;width:22px;height:21px;background:#dedbd5;border:1px solid #404040;box-sizing:border-box;box-shadow:inset 1px 1px 0 #fff,inset -1px -1px 0 #909090;"></div>
<div style="position:absolute;left:270px;top:90px;width:22px;height:21px;background:#dedbd5;border:1px solid #404040;box-sizing:border-box;box-shadow:inset 1px 1px 0 #fff,inset -1px -1px 0 #909090;"></div>
<div style="position:absolute;left:317px;top:90px;width:22px;height:21px;background:#dedbd5;border:1px solid #404040;box-sizing:border-box;box-shadow:inset 1px 1px 0 #fff,inset -1px -1px 0 #909090;"></div>
<svg style="position:absolute;left:249px;top:90px;" width="22" height="21" viewBox="0 0 22 21"><path d="M8.500 7.500h4V3.500L19.500 10.500L12.500 17.500V13.500H8.500z" fill="#000"/><path d="M4.500 8.500h1.300M6.500 8.500h1.300M3.500 10.500h1.300M5.500 10.500h2.300M4.500 12.500h1.300M6.500 12.500h1.300M8.500 5.500h1.300M10.500 5.500h1.300M8.500 15.500h1.300M10.500 15.500h1.300" stroke="#000" stroke-width="1.400"/></svg>
<svg style="position:absolute;left:270px;top:90px;" width="22" height="21" viewBox="0 0 22 21"><g fill="#000"><path id="rc" d="M6 9V6.500L8 4.300H15.500V7.500H19L15.250 12L11.500 7.500H9V9z"/><use href="#rc" transform="rotate(180 11.150 10.650)"/></g></svg>
<svg style="position:absolute;left:317px;top:90px;" width="22" height="21" viewBox="0 0 22 21"><rect x="5.500" y="4.500" width="5" height="10.500" fill="#ffb0b0"/><rect x="11.500" y="4.500" width="5" height="10.500" fill="#ffb0b0"/><rect x="6" y="5" width="4" height="9.500" fill="#d80000"/><rect x="12" y="5" width="4" height="9.500" fill="#d80000"/></svg>
<div style="position:absolute;left:217px;top:68px;width:782px;height:1px;background:#808080"></div>
<div style="position:absolute;left:217px;top:68px;width:1px;height:44px;background:#808080"></div>
<div style="position:absolute;left:963px;top:69px;width:36px;height:43px;background:#fff;border-left:1px solid #404040;box-sizing:border-box;"></div>
<svg style="position:absolute;left:964px;top:74px" width="34" height="33" viewBox="0 0 34 34" preserveAspectRatio="none"><rect x="0.5" y="0.5" width="33" height="33" fill="#d8d8d8" stroke="#000"/><rect x="2" y="2" width="24" height="12" fill="#000"/><path d="M2 8 q3-8 6 0 t6 0 t6 0 t6 0" stroke="#30d030" fill="none" stroke-width="1.2"/><rect x="2" y="15" width="24" height="11" fill="#000"/><path d="M3.500 26V16M5.5 26V18M7.500 26V20M9.500 26V19M11.500 26V21M13.500 26V20M15.500 26V22M17.500 26V21M19.500 26V22M21.500 26V23M23.500 26V22" stroke="#f0e020" stroke-width="1"/><rect x="27" y="3" width="4" height="22" fill="#b0b0b0" stroke="#707070" stroke-width="0.5"/><circle cx="29" cy="7" r="1.5" fill="#808080"/><rect x="27.6" y="10" width="2.8" height="6" rx="1.4" fill="#909090"/><rect x="27.600" y="17" width="2.8" height="6" rx="1.4" fill="#909090"/><path d="M3 29.500h5M10 29.500h9M21 29.500h4" stroke="#606060" stroke-width="2"/><ellipse cx="29.5" cy="29.5" rx="2.5" ry="1.800" fill="#e00000"/></svg>
<div style="position:absolute;left:217px;top:112px;width:782px;height:468px;background:#fbfbfb;border-top:1px solid #202020;border-left:1px solid #808080;border-right:1px solid #fff;border-bottom:1px solid #fff;box-sizing:border-box;"></div>
<div style="position:absolute;left:982px;top:113px;width:16px;height:450px;background:#d4d0c8;box-shadow:inset 1px 0 0 #f4f4f4, inset -1px 0 0 #f4f4f4;"></div>
<div style="position:absolute;left:982px;top:113px;width:16px;height:16px;background:#d4d0c8;box-shadow:inset 1px 1px 0 #fff,inset -1px -1px 0 #000,inset -2px -2px 0 #909090;"></div>
<svg style="position:absolute;left:982px;top:113px;" width="16" height="16" viewBox="0 0 16 16"><path d="M4 10h7.500l-3.750-4z" fill="#000"/></svg>
<div style="position:absolute;left:982px;top:547px;width:16px;height:16px;background:#d4d0c8;box-shadow:inset 1px 1px 0 #fff,inset -1px -1px 0 #000,inset -2px -2px 0 #909090;"></div>
<svg style="position:absolute;left:982px;top:547px;" width="16" height="16" viewBox="0 0 16 16"><path d="M4 6h7.500l-3.750 4z" fill="#000"/></svg>
<div style="position:absolute;left:982px;top:193px;width:16px;height:284px;background:#d4d0c8;box-shadow:inset 1px 1px 0 #fff,inset -1px -1px 0 #000,inset -2px -2px 0 #909090;"></div>
<div style="position:absolute;left:218px;top:563px;width:764px;height:16px;background:#d4d0c8;box-shadow:inset 0 1px 0 #f4f4f4, inset 0 -1px 0 #000;"></div>
<div style="position:absolute;left:218px;top:563px;width:16px;height:16px;background:#d4d0c8;box-shadow:inset 1px 1px 0 #fff,inset -1px -1px 0 #000,inset -2px -2px 0 #909090;"></div>
<svg style="position:absolute;left:218px;top:563px;" width="16" height="16" viewBox="0 0 16 16"><path d="M10 4v7.500l-4-3.750z" fill="#000"/></svg>
<div style="position:absolute;left:966px;top:563px;width:16px;height:16px;background:#d4d0c8;box-shadow:inset 1px 1px 0 #fff,inset -1px -1px 0 #000,inset -2px -2px 0 #909090;"></div>
<svg style="position:absolute;left:966px;top:563px;" width="16" height="16" viewBox="0 0 16 16"><path d="M6 4v7.500l4-3.750z" fill="#000"/></svg>
<div style="position:absolute;left:347px;top:563px;width:506px;height:16px;background:#d4d0c8;box-shadow:inset 1px 1px 0 #fff,inset -1px -1px 0 #000,inset -2px -2px 0 #909090;"></div>
<div style="position:absolute;left:982px;top:563px;width:16px;height:16px;background:#d4d0c8;"></div>
<svg style="position:absolute;left:982px;top:563px;" width="16" height="16" viewBox="0 0 16 16"><path d="M15 3L3 15M15 7L7 15M15 11l-4 4" stroke="#808080" stroke-width="1.2"/><path d="M15 2L2 15M15 6L6 15M15 10l-5 5" stroke="#fff" stroke-width="1"/></svg>
<div style="position:absolute;left:243px;top:127px;width:353px;height:185px;box-shadow:inset 1px 1px 0 #f6f6f6, inset -1px -1px 0 #7b7b7b;"></div>
<div style="position:absolute;left:610px;top:127px;width:353px;height:185px;box-shadow:inset 1px 1px 0 #f6f6f6, inset -1px -1px 0 #7b7b7b;"></div>
<div style="position:absolute;left:243px;top:318px;width:353px;height:214px;box-shadow:inset 1px 1px 0 #f6f6f6, inset -1px -1px 0 #7b7b7b;"></div>
<div style="position:absolute;left:610px;top:318px;width:353px;height:214px;box-shadow:inset 1px 1px 0 #f6f6f6, inset -1px -1px 0 #7b7b7b;"></div>
<svg style="position:absolute;left:0px;top:0px;shape-rendering:auto;" width="1024" height="600" viewBox="0 0 1024 600"><rect x="282" y="136" width="292" height="159" fill="#fbfffd"/><path d="M291.5 136V295M300.5 136V295M308.5 136V295M317.5 136V295M325.5 136V295M334.5 136V295M342.5 136V295M351.5 136V295M359.5 136V295M368.5 136V295M376.5 136V295M384.5 136V295M393.5 136V295M401.5 136V295M410.5 136V295M418.5 136V295M427.5 136V295M435.5 136V295M444.5 136V295M452.5 136V295M461.5 136V295M469.5 136V295M478.5 136V295M486.5 136V295M495.5 136V295M503.5 136V295M512.5 136V295M520.5 136V295M528.5 136V295M537.5 136V295M545.5 136V295M554.5 136V295M562.5 136V295M571.5 136V295" stroke="#c8f4f4" stroke-width="1" fill="none"/><path d="M282 290.5H574M282 284.5H574M282 278.5H574M282 272.5H574M282 265.5H574M282 259.5H574M282 253.5H574M282 247.5H574M282 240.5H574M282 234.5H574M282 228.5H574M282 222.5H574M282 216.5H574M282 209.5H574M282 203.5H574M282 197.5H574M282 191.5H574M282 184.5H574M282 178.5H574M282 172.5H574M282 166.5H574M282 159.5H574M282 153.5H574M282 147.5H574M282 141.5H574" stroke="#96de9e" stroke-width="1" fill="none"/><path d="M368.5 136V295M452.5 136V295M537.5 136V295" stroke="#a0eee4" stroke-width="1" fill="none"/><path d="M282 141.5H574M282 166.5H574M282 191.5H574M282 216.5H574M282 240.5H574M282 265.5H574M282 290.5H574" stroke="#38c640" stroke-width="1" fill="none"/><path d="M276 141.5H281M276 166.5H281M276 191.5H281M276 216.5H281M276 240.5H281M276 265.5H281M276 290.5H281M276 137.5H281M276 294.5H281" stroke="#38c640" stroke-width="1" fill="none"/><path d="M368.5 297V298M452.5 297V298M537.5 297V298M283.5 297V298M573.5 297V298" stroke="#38c640" stroke-width="1" fill="none"/><path d="M282.5 295V136.5H574" stroke="#3f7f7f" stroke-width="1" fill="none"/><path d="M282.5 295.5H574.5V136" stroke="#c8f4f4" stroke-width="1" fill="none"/><text x="253.5" y="140.9" textLength="20.1" lengthAdjust="spacingAndGlyphs" style="font-family:&quot;Liberation Sans&quot;,sans-serif;font-size:12.5px;stroke:#000;stroke-width:0.25px">6.32</text><text x="253.5" y="169.8" textLength="20.1" lengthAdjust="spacingAndGlyphs" style="font-family:&quot;Liberation Sans&quot;,sans-serif;font-size:12.5px;stroke:#000;stroke-width:0.25px">4.00</text><text x="253.5" y="194.7" textLength="20.1" lengthAdjust="spacingAndGlyphs" style="font-family:&quot;Liberation Sans&quot;,sans-serif;font-size:12.5px;stroke:#000;stroke-width:0.25px">2.00</text><text x="253.5" y="219.6" textLength="20.1" lengthAdjust="spacingAndGlyphs" style="font-family:&quot;Liberation Sans&quot;,sans-serif;font-size:12.5px;stroke:#000;stroke-width:0.25px">0.00</text><text x="247.7" y="244.5" textLength="25.9" lengthAdjust="spacingAndGlyphs" style="font-family:&quot;Liberation Sans&quot;,sans-serif;font-size:12.5px;stroke:#000;stroke-width:0.25px">-2.00</text><text x="247.7" y="269.4" textLength="25.9" lengthAdjust="spacingAndGlyphs" style="font-family:&quot;Liberation Sans&quot;,sans-serif;font-size:12.5px;stroke:#000;stroke-width:0.25px">-4.00</text><text x="247.7" y="297.9" textLength="25.9" lengthAdjust="spacingAndGlyphs" style="font-family:&quot;Liberation Sans&quot;,sans-serif;font-size:12.5px;stroke:#000;stroke-width:0.25px">-6.32</text><text x="272.4" y="310.6" textLength="20.1" lengthAdjust="spacingAndGlyphs" style="font-family:&quot;Liberation Sans&quot;,sans-serif;font-size:12.5px;stroke:#000;stroke-width:0.25px">0.00</text><text x="357.5" y="310.6" textLength="20.1" lengthAdjust="spacingAndGlyphs" style="font-family:&quot;Liberation Sans&quot;,sans-serif;font-size:12.5px;stroke:#000;stroke-width:0.25px">0.01</text><text x="441.8" y="310.6" textLength="20.1" lengthAdjust="spacingAndGlyphs" style="font-family:&quot;Liberation Sans&quot;,sans-serif;font-size:12.5px;stroke:#000;stroke-width:0.25px">0.02</text><text x="526.6" y="310.6" textLength="20.1" lengthAdjust="spacingAndGlyphs" style="font-family:&quot;Liberation Sans&quot;,sans-serif;font-size:12.5px;stroke:#000;stroke-width:0.25px">0.03</text><text x="562.5" y="310.6" textLength="20.1" lengthAdjust="spacingAndGlyphs" style="font-family:&quot;Liberation Sans&quot;,sans-serif;font-size:12.5px;stroke:#000;stroke-width:0.25px">0.03</text><polyline points="283.5,272.7 284.0,273.8 284.5,275.0 285.0,276.1 285.5,277.2 286.0,278.2 286.5,279.3 287.0,280.3 287.5,281.2 288.0,282.2 288.5,283.1 289.0,283.9 289.5,284.8 290.0,285.6 290.5,286.3 291.0,287.0 291.5,287.7 292.0,288.4 292.5,289.0 293.0,289.6 293.5,290.2 294.0,290.7 294.5,291.1 295.0,291.6 295.5,292.0 296.0,292.3 296.5,292.7 297.0,293.0 297.5,293.2 298.0,293.4 298.5,293.6 299.0,293.7 299.5,293.7 300.0,293.7 300.5,293.7 301.0,293.7 301.5,293.7 302.0,293.7 302.5,293.6 303.0,293.4 303.5,293.2 304.0,293.0 304.5,292.7 305.0,292.3 305.5,292.0 306.0,291.6 306.5,291.1 307.0,290.7 307.5,290.2 308.0,289.6 308.5,289.0 309.0,288.4 309.5,287.7 310.0,287.0 310.5,286.3 311.0,285.6 311.5,284.8 312.0,283.9 312.5,283.1 313.0,282.2 313.5,281.2 314.0,280.3 314.5,279.3 315.0,278.2 315.5,277.2 316.0,276.1 316.5,275.0 317.0,273.8 317.5,272.7 318.0,271.5 318.5,270.2 319.0,269.0 319.5,267.7 320.0,266.4 320.5,265.0 321.0,263.7 321.5,262.3 322.0,260.9 322.5,259.5 323.0,258.0 323.5,256.5 324.0,255.1 324.5,253.5 325.0,252.0 325.5,250.5 326.0,248.9 326.5,247.3 327.0,245.7 327.5,244.1 328.0,242.5 328.5,240.9 329.0,239.2 329.5,237.6 330.0,235.9 330.5,234.2 331.0,232.5 331.5,230.8 332.0,229.1 332.5,227.4 333.0,225.7 333.5,224.0 334.0,222.2 334.5,220.5 335.0,218.8 335.5,217.0 336.0,215.3 336.5,213.6 337.0,211.8 337.5,210.1 338.0,208.4 338.5,206.7 339.0,204.9 339.5,203.2 340.0,201.5 340.5,199.8 341.0,198.1 341.5,196.5 342.0,194.8 342.5,193.1 343.0,191.5 343.5,189.8 344.0,188.2 344.5,186.6 345.0,185.0 345.5,183.4 346.0,181.8 346.5,180.3 347.0,178.8 347.5,177.3 348.0,175.8 348.5,174.3 349.0,172.8 349.5,171.4 350.0,170.0 350.5,168.6 351.0,167.2 351.5,165.9 352.0,164.6 352.5,163.3 353.0,162.0 353.5,160.8 354.0,159.6 354.5,158.4 355.0,157.3 355.5,156.1 356.0,155.0 356.5,154.0 357.0,152.9 357.5,151.9 358.0,151.0 358.5,150.0 359.0,149.1 359.5,148.2 360.0,147.4 360.5,146.6 361.0,145.8 361.5,145.1 362.0,144.4 362.5,143.7 363.0,143.1 363.5,142.5 364.0,142.0 364.5,141.4 365.0,141.0 365.5,140.5 366.0,140.1 366.5,139.7 367.0,139.4 367.5,139.1 368.0,138.8 368.5,138.6 369.0,138.4 369.5,138.3 370.0,138.2 370.5,138.1 371.0,138.1 371.5,138.1 372.0,138.2 372.5,138.3 373.0,138.4 373.5,138.5 374.0,138.7 374.5,139.0 375.0,139.3 375.5,139.6 376.0,139.9 376.5,140.3 377.0,140.8 377.5,141.2 378.0,141.7 378.5,142.3 379.0,142.9 379.5,143.5 380.0,144.1 380.5,144.8 381.0,145.5 381.5,146.3 382.0,147.1 382.5,147.9 383.0,148.8 383.5,149.7 384.0,150.6 384.5,151.5 385.0,152.5 385.5,153.6 386.0,154.6 386.5,155.7 387.0,156.8 387.5,157.9 388.0,159.1 388.5,160.3 389.0,161.5 389.5,162.8 390.0,164.1 390.5,165.4 391.0,166.7 391.5,168.1 392.0,169.4 392.5,170.8 393.0,172.3 393.5,173.7 394.0,175.2 394.5,176.7 395.0,178.2 395.5,179.7 396.0,181.2 396.5,182.8 397.0,184.4 397.5,185.9 398.0,187.6 398.5,189.2 399.0,190.8 399.5,192.5 400.0,194.1 400.5,195.8 401.0,197.5 401.5,199.1 402.0,200.8 402.5,202.5 403.0,204.3 403.5,206.0 404.0,207.7 404.5,209.4 405.0,211.2 405.5,212.9 406.0,214.6 406.5,216.3 407.0,218.1 407.5,219.8 408.0,221.5 408.5,223.3 409.0,225.0 409.5,226.7 410.0,228.4 410.5,230.1 411.0,231.8 411.5,233.5 412.0,235.2 412.5,236.9 413.0,238.6 413.5,240.2 414.0,241.8 414.5,243.5 415.0,245.1 415.5,246.7 416.0,248.3 416.5,249.8 417.0,251.4 417.5,252.9 418.0,254.4 418.5,255.9 419.0,257.4 419.5,258.9 420.0,260.3 420.5,261.7 421.0,263.1 421.5,264.5 422.0,265.8 422.5,267.2 423.0,268.5 423.5,269.7 424.0,271.0 424.5,272.2 425.0,273.4 425.5,274.5 426.0,275.7 426.5,276.7 427.0,277.8 427.5,278.9 428.0,279.9 428.5,280.8 429.0,281.8 429.5,282.7 430.0,283.6 430.5,284.4 431.0,285.2 431.5,286.0 432.0,286.8 432.5,287.5 433.0,288.1 433.5,288.8 434.0,289.4 434.5,289.9 435.0,290.5 435.5,291.0 436.0,291.4 436.5,291.8 437.0,292.2 437.5,292.5 438.0,292.8 438.5,293.1 439.0,293.3 439.5,293.5 440.0,293.7 440.5,293.7 441.0,293.7 441.5,293.7 442.0,293.7 442.5,293.7 443.0,293.7 443.5,293.7 444.0,293.5 444.5,293.3 445.0,293.1 445.5,292.8 446.0,292.5 446.5,292.1 447.0,291.7 447.5,291.3 448.0,290.9 448.5,290.4 449.0,289.8 449.5,289.3 450.0,288.6 450.5,288.0 451.0,287.3 451.5,286.6 452.0,285.9 452.5,285.1 453.0,284.3 453.5,283.4 454.0,282.5 454.5,281.6 455.0,280.7 455.5,279.7 456.0,278.7 456.5,277.6 457.0,276.5 457.5,275.4 458.0,274.3 458.5,273.1 459.0,271.9 459.5,270.7 460.0,269.5 460.5,268.2 461.0,266.9 461.5,265.6 462.0,264.2 462.5,262.8 463.0,261.5 463.5,260.0 464.0,258.6 464.5,257.1 465.0,255.6 465.5,254.1 466.0,252.6 466.5,251.1 467.0,249.5 467.5,248.0 468.0,246.4 468.5,244.8 469.0,243.1 469.5,241.5 470.0,239.9 470.5,238.2 471.0,236.6 471.5,234.9 472.0,233.2 472.5,231.5 473.0,229.8 473.5,228.1 474.0,226.4 474.5,224.6 475.0,222.9 475.5,221.2 476.0,219.5 476.5,217.7 477.0,216.0 477.5,214.3 478.0,212.5 478.5,210.8 479.0,209.1 479.5,207.4 480.0,205.6 480.5,203.9 481.0,202.2 481.5,200.5 482.0,198.8 482.5,197.1 483.0,195.4 483.5,193.8 484.0,192.1 484.5,190.5 485.0,188.9 485.5,187.2 486.0,185.6 486.5,184.0 487.0,182.5 487.5,180.9 488.0,179.4 488.5,177.9 489.0,176.4 489.5,174.9 490.0,173.4 490.5,172.0 491.0,170.5 491.5,169.2 492.0,167.8 492.5,166.4 493.0,165.1 493.5,163.8 494.0,162.5 494.5,161.3 495.0,160.1 495.5,158.9 496.0,157.7 496.5,156.6 497.0,155.5 497.5,154.4 498.0,153.3 498.5,152.3 499.0,151.3 499.5,150.4 500.0,149.5 500.5,148.6 501.0,147.7 501.5,146.9 502.0,146.1 502.5,145.4 503.0,144.7 503.5,144.0 504.0,143.4 504.5,142.7 505.0,142.2 505.5,141.6 506.0,141.1 506.5,140.7 507.0,140.3 507.5,139.9 508.0,139.5 508.5,139.2 509.0,138.9 509.5,138.7 510.0,138.5 510.5,138.3 511.0,138.2 511.5,138.1 512.0,138.1 512.5,138.1 513.0,138.1 513.5,138.2 514.0,138.3 514.5,138.5 515.0,138.7 515.5,138.9 516.0,139.2 516.5,139.5 517.0,139.8 517.5,140.2 518.0,140.6 518.5,141.0 519.0,141.5 519.5,142.1 520.0,142.6 520.5,143.2 521.0,143.9 521.5,144.5 522.0,145.2 522.5,146.0 523.0,146.8 523.5,147.6 524.0,148.4 524.5,149.3 525.0,150.2 525.5,151.2 526.0,152.1 526.5,153.1 527.0,154.2 527.5,155.3 528.0,156.3 528.5,157.5 529.0,158.6 529.5,159.8 530.0,161.0 530.5,162.3 531.0,163.5 531.5,164.8 532.0,166.2 532.5,167.5 533.0,168.9 533.5,170.3 534.0,171.7 534.5,173.1 535.0,174.6 535.5,176.1 536.0,177.6 536.5,179.1 537.0,180.6 537.5,182.2 538.0,183.7 538.5,185.3 539.0,186.9 539.5,188.5 540.0,190.2 540.5,191.8 541.0,193.4 541.5,195.1 542.0,196.8 542.5,198.5 543.0,200.2 543.5,201.9 544.0,203.6 544.5,205.3 545.0,207.0 545.5,208.7 546.0,210.5 546.5,212.2 547.0,213.9 547.5,215.7 548.0,217.4 548.5,219.1 549.0,220.8 549.5,222.6 550.0,224.3 550.5,226.0 551.0,227.7 551.5,229.5 552.0,231.2 552.5,232.9 553.0,234.5 553.5,236.2 554.0,237.9 554.5,239.5 555.0,241.2 555.5,242.8 556.0,244.4 556.5,246.1 557.0,247.6 557.5,249.2 558.0,250.8 558.5,252.3 559.0,253.8 559.5,255.3 560.0,256.8 560.5,258.3 561.0,259.7 561.5,261.2 562.0,262.6 562.5,263.9 563.0,265.3 563.5,266.6 564.0,267.9 564.5,269.2 565.0,270.5 565.5,271.7 566.0,272.9 566.5,274.1 567.0,275.2 567.5,276.3 568.0,277.4 568.5,278.4 569.0,279.5 569.5,280.5 570.0,281.4 570.5,282.3 571.0,283.2 571.5,284.1 572.0,284.9 572.5,285.7 573.0,286.5 573.5,287.2" fill="none" stroke="#cf0505" stroke-width="2.6" stroke-linejoin="round"/><rect x="649" y="136" width="292" height="159" fill="#fbfffd"/><path d="M658.5 136V295M666.5 136V295M673.5 136V295M681.5 136V295M689.5 136V295M697.5 136V295M705.5 136V295M713.5 136V295M721.5 136V295M729.5 136V295M736.5 136V295M744.5 136V295M752.5 136V295M760.5 136V295M768.5 136V295M776.5 136V295M784.5 136V295M792.5 136V295M800.5 136V295M807.5 136V295M815.5 136V295M823.5 136V295M831.5 136V295M839.5 136V295M847.5 136V295M855.5 136V295M863.5 136V295M870.5 136V295M878.5 136V295M886.5 136V295M894.5 136V295M902.5 136V295M910.5 136V295M918.5 136V295M926.5 136V295M933.5 136V295" stroke="#c8f4f4" stroke-width="1" fill="none"/><path d="M649 291.5H941M649 286.5H941M649 282.5H941M649 278.5H941M649 273.5H941M649 269.5H941M649 265.5H941M649 261.5H941M649 256.5H941M649 252.5H941M649 248.5H941M649 243.5H941M649 239.5H941M649 235.5H941M649 231.5H941M649 226.5H941M649 222.5H941M649 218.5H941M649 214.5H941M649 209.5H941M649 205.5H941M649 201.5H941M649 196.5H941M649 192.5H941M649 188.5H941M649 184.5H941M649 179.5H941M649 175.5H941M649 171.5H941M649 167.5H941M649 162.5H941M649 158.5H941M649 154.5H941M649 149.5H941M649 145.5H941M649 141.5H941" stroke="#96de9e" stroke-width="1" fill="none"/><path d="M729.5 136V295M807.5 136V295M886.5 136V295" stroke="#a0eee4" stroke-width="1" fill="none"/><path d="M649 154.5H941M649 175.5H941M649 196.5H941M649 218.5H941M649 239.5H941M649 261.5H941M649 282.5H941" stroke="#38c640" stroke-width="1" fill="none"/><path d="M643 154.5H648M643 175.5H648M643 196.5H648M643 218.5H648M643 239.5H648M643 261.5H648M643 282.5H648M643 137.5H648M643 294.5H648" stroke="#38c640" stroke-width="1" fill="none"/><path d="M729.5 297V298M807.5 297V298M886.5 297V298M650.5 297V298M940.5 297V298" stroke="#38c640" stroke-width="1" fill="none"/><path d="M649.5 295V136.5H941" stroke="#3f7f7f" stroke-width="1" fill="none"/><path d="M649.5 295.5H941.5V136" stroke="#c8f4f4" stroke-width="1" fill="none"/><text x="620.4" y="140.9" textLength="20.1" lengthAdjust="spacingAndGlyphs" style="font-family:&quot;Liberation Sans&quot;,sans-serif;font-size:12.5px;stroke:#000;stroke-width:0.25px">0.08</text><text x="620.4" y="157.8" textLength="20.1" lengthAdjust="spacingAndGlyphs" style="font-family:&quot;Liberation Sans&quot;,sans-serif;font-size:12.5px;stroke:#000;stroke-width:0.25px">0.06</text><text x="620.4" y="179.2" textLength="20.1" lengthAdjust="spacingAndGlyphs" style="font-family:&quot;Liberation Sans&quot;,sans-serif;font-size:12.5px;stroke:#000;stroke-width:0.25px">0.04</text><text x="620.4" y="200.6" textLength="20.1" lengthAdjust="spacingAndGlyphs" style="font-family:&quot;Liberation Sans&quot;,sans-serif;font-size:12.5px;stroke:#000;stroke-width:0.25px">0.02</text><text x="620.4" y="221.9" textLength="20.1" lengthAdjust="spacingAndGlyphs" style="font-family:&quot;Liberation Sans&quot;,sans-serif;font-size:12.5px;stroke:#000;stroke-width:0.25px">0.00</text><text x="614.7" y="243.3" textLength="25.9" lengthAdjust="spacingAndGlyphs" style="font-family:&quot;Liberation Sans&quot;,sans-serif;font-size:12.5px;stroke:#000;stroke-width:0.25px">-0.02</text><text x="614.7" y="264.7" textLength="25.9" lengthAdjust="spacingAndGlyphs" style="font-family:&quot;Liberation Sans&quot;,sans-serif;font-size:12.5px;stroke:#000;stroke-width:0.25px">-0.04</text><text x="614.7" y="286.1" textLength="25.9" lengthAdjust="spacingAndGlyphs" style="font-family:&quot;Liberation Sans&quot;,sans-serif;font-size:12.5px;stroke:#000;stroke-width:0.25px">-0.06</text><text x="614.7" y="297.9" textLength="25.9" lengthAdjust="spacingAndGlyphs" style="font-family:&quot;Liberation Sans&quot;,sans-serif;font-size:12.5px;stroke:#000;stroke-width:0.25px">-0.07</text><text x="639.4" y="310.6" textLength="20.1" lengthAdjust="spacingAndGlyphs" style="font-family:&quot;Liberation Sans&quot;,sans-serif;font-size:12.5px;stroke:#000;stroke-width:0.25px">0.00</text><text x="718.6" y="310.6" textLength="20.1" lengthAdjust="spacingAndGlyphs" style="font-family:&quot;Liberation Sans&quot;,sans-serif;font-size:12.5px;stroke:#000;stroke-width:0.25px">0.01</text><text x="796.6" y="310.6" textLength="20.1" lengthAdjust="spacingAndGlyphs" style="font-family:&quot;Liberation Sans&quot;,sans-serif;font-size:12.5px;stroke:#000;stroke-width:0.25px">0.02</text><text x="875.7" y="310.6" textLength="20.1" lengthAdjust="spacingAndGlyphs" style="font-family:&quot;Liberation Sans&quot;,sans-serif;font-size:12.5px;stroke:#000;stroke-width:0.25px">0.03</text><text x="929.4" y="310.6" textLength="20.1" lengthAdjust="spacingAndGlyphs" style="font-family:&quot;Liberation Sans&quot;,sans-serif;font-size:12.5px;stroke:#000;stroke-width:0.25px">0.04</text><polyline points="650.5,213.0 656.0,213.0 657.0,215.6 659.0,214.0 660.5,215.8 672.0,215.8 673.5,205.0 676.0,170.0 678.5,146.0 679.5,142.5 681.0,148.0 684.0,180.0 687.0,205.0 689.0,220.6 699.0,220.6 701.0,222.6 704.0,221.0 706.0,222.4 708.0,220.6 738.0,220.6 739.5,228.0 741.5,262.0 743.5,290.0 744.5,293.5 746.0,288.0 749.0,262.0 752.0,235.0 754.0,218.0 755.5,213.8 757.0,213.0 781.1,213.0 786.6,213.0 787.6,215.6 789.6,214.0 791.1,215.8 802.6,215.8 804.1,205.0 806.6,170.0 809.1,146.0 810.1,138.5 811.6,148.0 814.6,180.0 817.6,205.0 819.6,220.6 829.6,220.6 831.6,222.6 834.6,221.0 836.6,222.4 838.6,220.6 868.6,220.6 870.1,228.0 872.1,262.0 874.1,290.0 875.1,293.5 876.6,288.0 879.6,262.0 882.6,235.0 884.6,218.0 886.1,213.8 887.6,213.0 911.7,213.0 917.2,213.0 918.2,215.6 920.2,214.0 921.7,215.8 933.2,215.8 934.7,205.0 937.2,170.0 939.7,146.0" fill="none" stroke="#cf0505" stroke-width="2.2" stroke-linejoin="round"/><rect x="286" y="323" width="287" height="189" fill="#fbfffd"/><path d="M294.5 323V512M301.5 323V512M308.5 323V512M315.5 323V512M322.5 323V512M328.5 323V512M335.5 323V512M342.5 323V512M349.5 323V512M356.5 323V512M363.5 323V512M370.5 323V512M377.5 323V512M384.5 323V512M391.5 323V512M398.5 323V512M405.5 323V512M412.5 323V512M419.5 323V512M426.5 323V512M433.5 323V512M440.5 323V512M447.5 323V512M454.5 323V512M461.5 323V512M468.5 323V512M475.5 323V512M482.5 323V512M489.5 323V512M496.5 323V512M503.5 323V512M510.5 323V512M516.5 323V512M523.5 323V512M530.5 323V512M537.5 323V512M544.5 323V512M551.5 323V512M558.5 323V512M565.5 323V512" stroke="#c8f4f4" stroke-width="1" fill="none"/><path d="M286 328.5H573M286 337.5H573M286 345.5H573M286 353.5H573M286 361.5H573M286 369.5H573M286 377.5H573M286 385.5H573M286 393.5H573M286 401.5H573M286 409.5H573M286 417.5H573M286 425.5H573M286 434.5H573M286 442.5H573M286 450.5H573M286 458.5H573M286 466.5H573M286 474.5H573M286 482.5H573M286 490.5H573M286 498.5H573M286 506.5H573" stroke="#96de9e" stroke-width="1" fill="none"/><path d="M342.5 323V512M398.5 323V512M454.5 323V512M510.5 323V512M565.5 323V512" stroke="#a0eee4" stroke-width="1" fill="none"/><path d="M286 345.5H573M286 377.5H573M286 409.5H573M286 442.5H573M286 474.5H573M286 506.5H573" stroke="#38c640" stroke-width="1" fill="none"/><path d="M280 345.5H285M280 377.5H285M280 409.5H285M280 442.5H285M280 474.5H285M280 506.5H285M280 324.5H285M280 510.5H285" stroke="#38c640" stroke-width="1" fill="none"/><path d="M342.5 514V515M398.5 514V515M454.5 514V515M510.5 514V515M565.5 514V515M287.5 514V515M571.5 514V515" stroke="#38c640" stroke-width="1" fill="none"/><path d="M286.5 512V323.5H573" stroke="#23407f" stroke-width="1" fill="none"/><path d="M286.5 512.5H573.5V323" stroke="#c8f4f4" stroke-width="1" fill="none"/><text x="257.4" y="327.7" textLength="20.1" lengthAdjust="spacingAndGlyphs" style="font-family:&quot;Liberation Sans&quot;,sans-serif;font-size:12.5px;stroke:#000;stroke-width:0.25px">13.1</text><text x="263.1" y="348.7" textLength="14.4" lengthAdjust="spacingAndGlyphs" style="font-family:&quot;Liberation Sans&quot;,sans-serif;font-size:12.5px;stroke:#000;stroke-width:0.25px">0.0</text><text x="251.6" y="381.1" textLength="25.9" lengthAdjust="spacingAndGlyphs" style="font-family:&quot;Liberation Sans&quot;,sans-serif;font-size:12.5px;stroke:#000;stroke-width:0.25px">-20.0</text><text x="251.6" y="413.4" textLength="25.9" lengthAdjust="spacingAndGlyphs" style="font-family:&quot;Liberation Sans&quot;,sans-serif;font-size:12.5px;stroke:#000;stroke-width:0.25px">-40.0</text><text x="251.6" y="445.8" textLength="25.9" lengthAdjust="spacingAndGlyphs" style="font-family:&quot;Liberation Sans&quot;,sans-serif;font-size:12.5px;stroke:#000;stroke-width:0.25px">-60.0</text><text x="251.6" y="478.1" textLength="25.9" lengthAdjust="spacingAndGlyphs" style="font-family:&quot;Liberation Sans&quot;,sans-serif;font-size:12.5px;stroke:#000;stroke-width:0.25px">-80.0</text><text x="245.8" y="514.5" textLength="31.6" lengthAdjust="spacingAndGlyphs" style="font-family:&quot;Liberation Sans&quot;,sans-serif;font-size:12.5px;stroke:#000;stroke-width:0.25px">-102.6</text><text x="279.2" y="527.8" textLength="14.4" lengthAdjust="spacingAndGlyphs" style="font-family:&quot;Liberation Sans&quot;,sans-serif;font-size:12.5px;stroke:#000;stroke-width:0.25px">0.0</text><text x="323.9" y="527.8" textLength="37.4" lengthAdjust="spacingAndGlyphs" style="font-family:&quot;Liberation Sans&quot;,sans-serif;font-size:12.5px;stroke:#000;stroke-width:0.25px">20000.0</text><text x="379.1" y="527.8" textLength="37.4" lengthAdjust="spacingAndGlyphs" style="font-family:&quot;Liberation Sans&quot;,sans-serif;font-size:12.5px;stroke:#000;stroke-width:0.25px">40000.0</text><text x="435.0" y="527.8" textLength="37.4" lengthAdjust="spacingAndGlyphs" style="font-family:&quot;Liberation Sans&quot;,sans-serif;font-size:12.5px;stroke:#000;stroke-width:0.25px">60000.0</text><text x="491.0" y="527.8" textLength="37.4" lengthAdjust="spacingAndGlyphs" style="font-family:&quot;Liberation Sans&quot;,sans-serif;font-size:12.5px;stroke:#000;stroke-width:0.25px">80000.0</text><text x="549.0" y="527.8" textLength="43.1" lengthAdjust="spacingAndGlyphs" style="font-family:&quot;Liberation Sans&quot;,sans-serif;font-size:12.5px;stroke:#000;stroke-width:0.25px">102011.7</text><polyline points="287.6,324 287.9,360 288.4,392 288.2,400 288.9,412 288.7,424 289.5,436 289.9,452 290.6,462 291.2,474 291.6,486" fill="none" stroke="#1242c0" stroke-width="1.9" stroke-linejoin="round"/><polyline points="291.40,472.3 291.82,491.9 292.24,475.5 292.66,492.7 293.08,474.3 293.50,493.8 293.92,477.2 294.34,492.5 294.76,474.4 295.18,494.2 295.60,479.0 296.02,493.1 296.44,477.0 296.86,494.4 297.28,478.4 297.70,495.0 298.12,482.5 298.54,494.5 298.96,482.2 299.38,495.1 299.80,480.4 300.22,494.5 300.64,479.8 301.06,494.3 301.48,483.8 301.90,495.1 302.32,483.5 302.74,498.5 303.16,480.9 303.58,498.1 304.00,484.4 304.42,494.5 304.84,483.3 305.26,495.6 305.68,482.0 306.10,494.9 306.52,484.4 306.94,499.8 307.36,480.7 307.78,494.2 308.20,485.1 308.62,496.8 309.04,483.8 309.46,497.0 309.88,484.2 310.30,494.2 310.72,484.9 311.14,496.2 311.56,482.6 311.98,497.1 312.40,485.4 312.82,507.3 313.24,482.2 313.66,493.8 314.08,485.5 314.50,498.2 314.92,483.9 315.34,495.8 315.76,484.1 316.18,496.1 316.60,483.2 317.02,496.7 317.44,485.9 317.86,494.8 318.28,483.2 318.70,497.9 319.12,482.4 319.54,494.0 319.96,485.9 320.38,496.3 320.80,484.8 321.22,495.9 321.64,484.7 322.06,495.2 322.48,484.1 322.90,494.6 323.32,484.7 323.74,495.8 324.16,484.7 324.58,494.2 325.00,483.0 325.42,502.9 325.84,486.1 326.26,495.4 326.68,483.5 327.10,500.1 327.52,485.8 327.94,494.2 328.36,485.9 328.78,496.9 329.20,486.6 329.62,494.6 330.04,486.5 330.46,498.0 330.88,482.4 331.30,495.0 331.72,485.7 332.14,497.2 332.56,481.6 332.98,495.1 333.40,483.0 333.82,495.4 334.24,486.5 334.66,495.8 335.08,484.8 335.50,496.5 335.92,485.0 336.34,494.3 336.76,486.4 337.18,497.7 337.60,485.3 338.02,497.4 338.44,485.8 338.86,494.6 339.28,484.3 339.70,495.2 340.12,483.6 340.54,494.3 340.96,484.7 341.38,495.0 341.80,485.3 342.22,495.8 342.64,485.9 343.06,502.3 343.48,486.6 343.90,496.9 344.32,486.9 344.74,495.8 345.16,485.0 345.58,494.4 346.00,484.9 346.42,497.0 346.84,486.7 347.26,495.4 347.68,485.7 348.10,495.0 348.52,486.9 348.94,496.5 349.36,485.5 349.78,494.3 350.20,482.0 350.62,494.3 351.04,486.6 351.46,494.5 351.88,484.2 352.30,495.7 352.72,482.0 353.14,496.5 353.56,487.0 353.98,494.4 354.40,483.7 354.82,496.7 355.24,486.0 355.66,494.1 356.08,486.1 356.50,496.0 356.92,480.7 357.34,499.8 357.76,486.5 358.18,497.4 358.60,486.9 359.02,495.1 359.44,487.0 359.86,496.9 360.28,484.1 360.70,497.0 361.12,479.8 361.54,498.3 361.96,484.2 362.38,496.8 362.80,486.6 363.22,499.8 363.64,481.3 364.06,494.2 364.48,484.6 364.90,495.8 365.32,486.0 365.74,494.7 366.16,484.9 366.58,495.7 367.00,485.6 367.42,494.6 367.84,486.1 368.26,497.7 368.68,480.8 369.10,496.7 369.52,481.3 369.94,495.0 370.36,481.1 370.78,494.9 371.20,485.9 371.62,494.4 372.04,486.2 372.46,495.5 372.88,479.6 373.30,496.1 373.72,484.3 374.14,495.8 374.56,484.6 374.98,495.8 375.40,482.4 375.82,494.4 376.24,484.6 376.66,494.4 377.08,486.1 377.50,496.3 377.92,485.3 378.34,494.8 378.76,484.6 379.18,495.1 379.60,485.2 380.02,497.1 380.44,485.3 380.86,497.2 381.28,484.9 381.70,496.2 382.12,486.0 382.54,495.3 382.96,486.8 383.38,497.4 383.80,484.8 384.22,497.2 384.64,483.6 385.06,496.6 385.48,486.1 385.90,496.0 386.32,486.3 386.74,497.3 387.16,486.2 387.58,502.2 388.00,484.6 388.42,498.0 388.84,483.6 389.26,496.3 389.68,484.7 390.10,497.9 390.52,486.8 390.94,496.8 391.36,484.1 391.78,495.1 392.20,485.5 392.62,498.6 393.04,485.1 393.46,496.6 393.88,486.7 394.30,497.6 394.72,486.5 395.14,495.2 395.56,485.7 395.98,497.8 396.40,485.2 396.82,494.6 397.24,486.9 397.66,497.6 398.08,486.8 398.50,496.4 398.92,486.4 399.34,497.9 399.76,482.0 400.18,495.0 400.60,486.8 401.02,494.4 401.44,486.6 401.86,497.5 402.28,486.5 402.70,496.0 403.12,484.3 403.54,497.4 403.96,487.5 404.38,498.2 404.80,487.1 405.22,494.5 405.64,483.7 406.06,496.8 406.48,483.9 406.90,495.0 407.32,486.6 407.74,495.2 408.16,487.1 408.58,495.8 409.00,483.3 409.42,494.4 409.84,487.3 410.26,494.7 410.68,486.7 411.10,496.5 411.52,486.4 411.94,495.9 412.36,484.9 412.78,496.5 413.20,486.5 413.62,497.9 414.04,484.0 414.46,495.2 414.88,485.9 415.30,495.5 415.72,485.2 416.14,495.7 416.56,485.2 416.98,494.7 417.40,487.2 417.82,497.3 418.24,485.6 418.66,497.4 419.08,487.0 419.50,496.6 419.92,486.0 420.34,499.0 420.76,484.5 421.18,495.2 421.60,486.9 422.02,496.4 422.44,486.3 422.86,495.1 423.28,487.1 423.70,497.4 424.12,486.7 424.54,497.6 424.96,486.4 425.38,494.5 425.80,484.4 426.22,497.9 426.64,484.1 427.06,494.5 427.48,486.3 427.90,497.5 428.32,487.2 428.74,499.4 429.16,485.2 429.58,498.3 430.00,480.2 430.42,496.3 430.84,483.0 431.26,494.6 431.68,487.2 432.10,496.7 432.52,487.6 432.94,494.8 433.36,485.3 433.78,497.2 434.20,486.8 434.62,496.6 435.04,485.2 435.46,495.9 435.88,483.0 436.30,495.5 436.72,487.5 437.14,496.4 437.56,484.2 437.98,496.9 438.40,486.0 438.82,497.1 439.24,487.1 439.66,495.2 440.08,486.0 440.50,500.0 440.92,486.6 441.34,494.6 441.76,485.7 442.18,495.6 442.60,485.3 443.02,496.4 443.44,487.1 443.86,498.1 444.28,485.1 444.70,496.4 445.12,486.7 445.54,498.2 445.96,479.4 446.38,496.1 446.80,486.0 447.22,496.3 447.64,485.7 448.06,494.8 448.48,483.6 448.90,497.2 449.32,485.4 449.74,494.5 450.16,486.5 450.58,498.2 451.00,486.3 451.42,498.7 451.84,487.4 452.26,495.7 452.68,486.9 453.10,502.0 453.52,485.3 453.94,495.2 454.36,485.0 454.78,495.7 455.20,485.7 455.62,494.5 456.04,484.0 456.46,495.7 456.88,485.6 457.30,495.5 457.72,486.9 458.14,501.8 458.56,480.0 458.98,495.1 459.40,486.9 459.82,496.0 460.24,487.4 460.66,494.8 461.08,485.6 461.50,494.6 461.92,487.1 462.34,499.1 462.76,485.7 463.18,496.3 463.60,487.1 464.02,494.7 464.44,487.0 464.86,496.9 465.28,486.6 465.70,496.0 466.12,487.5 466.54,496.8 466.96,487.2 467.38,499.2 467.80,487.2 468.22,494.5 468.64,483.5 469.06,497.3 469.48,482.7 469.90,494.6 470.32,485.0 470.74,496.1 471.16,486.9 471.58,498.2 472.00,484.1 472.42,496.5 472.84,487.1 473.26,496.1 473.68,486.6 474.10,498.1 474.52,483.1 474.94,495.0 475.36,487.0 475.78,496.9 476.20,486.3 476.62,497.5 477.04,485.8 477.46,497.0 477.88,484.2 478.30,494.9 478.72,485.1 479.14,494.6 479.56,485.5 479.98,495.0 480.40,486.6 480.82,494.9 481.24,483.9 481.66,496.0 482.08,486.9 482.50,498.1 482.92,485.6 483.34,494.4 483.76,487.1 484.18,494.2 484.60,487.4 485.02,495.3 485.44,484.6 485.86,498.7 486.28,486.8 486.70,495.3 487.12,485.7 487.54,495.8 487.96,485.9 488.38,495.6 488.80,487.0 489.22,496.6 489.64,483.8 490.06,498.6 490.48,485.9 490.90,496.7 491.32,487.6 491.74,498.0 492.16,486.2 492.58,497.7 493.00,487.2 493.42,495.8 493.84,484.6 494.26,494.5 494.68,484.8 495.10,497.4 495.52,487.1 495.94,502.4 496.36,487.3 496.78,494.5 497.20,486.2 497.62,496.5 498.04,485.3 498.46,495.5 498.88,487.1 499.30,497.2 499.72,487.4 500.14,497.1 500.56,487.2 500.98,495.0 501.40,486.1 501.82,496.9 502.24,486.2 502.66,496.6 503.08,484.9 503.50,495.7 503.92,482.7 504.34,497.8 504.76,486.2 505.18,495.3 505.60,486.6 506.02,494.3 506.44,486.1 506.86,497.0 507.28,486.9 507.70,495.0 508.12,487.6 508.54,496.8 508.96,485.3 509.38,496.1 509.80,485.9 510.22,497.9 510.64,487.5 511.06,495.3 511.48,486.2 511.90,495.5 512.32,486.1 512.74,498.1 513.16,485.2 513.58,496.8 514.00,486.8 514.42,494.9 514.84,483.3 515.26,496.1 515.68,486.9 516.10,497.1 516.52,486.6 516.94,496.9 517.36,485.6 517.78,496.2 518.20,484.4 518.62,496.1 519.04,486.1 519.46,496.4 519.88,485.3 520.30,499.8 520.72,487.2 521.14,496.1 521.56,480.3 521.98,497.2 522.40,486.7 522.82,495.5 523.24,487.0 523.66,497.1 524.08,486.2 524.50,495.9 524.92,486.3 525.34,494.7 525.76,487.0 526.18,497.5 526.60,486.9 527.02,497.7 527.44,487.4 527.86,494.4 528.28,486.3 528.70,496.6 529.12,485.1 529.54,495.1 529.96,485.9 530.38,494.3 530.80,486.3 531.22,497.1 531.64,486.6 532.06,494.5 532.48,487.1 532.90,499.4 533.32,485.5 533.74,495.2 534.16,485.6 534.58,495.2 535.00,485.8 535.42,495.9 535.84,484.3 536.26,495.3 536.68,485.8 537.10,497.4 537.52,486.1 537.94,496.3 538.36,487.1 538.78,494.7 539.20,486.2 539.62,495.5 540.04,484.2 540.46,502.8 540.88,485.3 541.30,501.9 541.72,486.7 542.14,495.3 542.56,485.7 542.98,498.9 543.40,487.4 543.82,494.7 544.24,487.2 544.66,494.9 545.08,487.1 545.50,496.6 545.92,485.3 546.34,496.1 546.76,486.1 547.18,495.2 547.60,484.0 548.02,494.8 548.44,484.1 548.86,494.4 549.28,486.0 549.70,501.4 550.12,485.7 550.54,494.9 550.96,486.0 551.38,495.3 551.80,484.9 552.22,495.5 552.64,486.1 553.06,496.7 553.48,485.5 553.90,494.5 554.32,485.0 554.74,495.3 555.16,486.2 555.58,498.5 556.00,485.3 556.42,494.4 556.84,485.5 557.26,497.6 557.68,486.5 558.10,495.1 558.52,487.6 558.94,496.5 559.36,486.8 559.78,494.7 560.20,485.9 560.62,494.9 561.04,484.5 561.46,504.5 561.88,487.5 562.30,496.1 562.72,486.8 563.14,495.8 563.56,485.3 563.98,498.0 564.40,484.3 564.82,494.6 565.24,485.5 565.66,495.0 566.08,483.3 566.50,496.3 566.92,485.1 567.34,494.4 567.76,487.4 568.18,497.2 568.60,486.8 569.02,495.9 569.44,483.7 569.86,495.7 570.28,485.9 570.70,498.4 571.12,487.6 571.54,497.1 571.96,485.4 572.38,495.7" fill="none" stroke="#0c44c6" stroke-width="1.05" stroke-linejoin="round"/><path d="M312.3 494V510.5 M298.5 487V476 M296 488V474 M330.5 486V473.5 M328.5 487l-2-7 M458.3 486V473.5 M463.3 486V472.5 M340 496V503 M384 496V504 M515.5 483V478" stroke="#0c44c6" stroke-width="1.2" fill="none"/><rect x="647" y="323" width="293" height="189" fill="#fbfffd"/><path d="M655.5 323V512M662.5 323V512M670.5 323V512M677.5 323V512M684.5 323V512M691.5 323V512M698.5 323V512M706.5 323V512M713.5 323V512M720.5 323V512M727.5 323V512M735.5 323V512M742.5 323V512M749.5 323V512M756.5 323V512M763.5 323V512M771.5 323V512M778.5 323V512M785.5 323V512M792.5 323V512M800.5 323V512M807.5 323V512M814.5 323V512M821.5 323V512M828.5 323V512M836.5 323V512M843.5 323V512M850.5 323V512M857.5 323V512M865.5 323V512M872.5 323V512M879.5 323V512M886.5 323V512M893.5 323V512M901.5 323V512M908.5 323V512M915.5 323V512M922.5 323V512M929.5 323V512M937.5 323V512" stroke="#c8f4f4" stroke-width="1" fill="none"/><path d="M647 324.5H940M647 331.5H940M647 338.5H940M647 344.5H940M647 351.5H940M647 358.5H940M647 365.5H940M647 372.5H940M647 379.5H940M647 386.5H940M647 393.5H940M647 400.5H940M647 407.5H940M647 414.5H940M647 421.5H940M647 428.5H940M647 435.5H940M647 442.5H940M647 449.5H940M647 456.5H940M647 462.5H940M647 469.5H940M647 476.5H940M647 483.5H940M647 490.5H940M647 497.5H940M647 504.5H940" stroke="#96de9e" stroke-width="1" fill="none"/><path d="M720.5 323V512M792.5 323V512M865.5 323V512M937.5 323V512" stroke="#a0eee4" stroke-width="1" fill="none"/><path d="M647 331.5H940M647 365.5H940M647 400.5H940M647 435.5H940M647 469.5H940M647 504.5H940" stroke="#38c640" stroke-width="1" fill="none"/><path d="M641 331.5H646M641 365.5H646M641 400.5H646M641 435.5H646M641 469.5H646M641 504.5H646M641 324.5H646M641 510.5H646" stroke="#38c640" stroke-width="1" fill="none"/><path d="M720.5 514V515M792.5 514V515M865.5 514V515M937.5 514V515M648.5 514V515M938.5 514V515" stroke="#38c640" stroke-width="1" fill="none"/><path d="M647.5 512V323.5H940" stroke="#2d5a96" stroke-width="1" fill="none"/><path d="M647.5 512.5H940.5V323" stroke="#c8f4f4" stroke-width="1" fill="none"/><text x="611.8" y="327.7" textLength="25.9" lengthAdjust="spacingAndGlyphs" style="font-family:&quot;Liberation Sans&quot;,sans-serif;font-size:12.5px;stroke:#000;stroke-width:0.25px">-38.1</text><text x="611.8" y="369.4" textLength="25.9" lengthAdjust="spacingAndGlyphs" style="font-family:&quot;Liberation Sans&quot;,sans-serif;font-size:12.5px;stroke:#000;stroke-width:0.25px">-50.0</text><text x="611.8" y="404.1" textLength="25.9" lengthAdjust="spacingAndGlyphs" style="font-family:&quot;Liberation Sans&quot;,sans-serif;font-size:12.5px;stroke:#000;stroke-width:0.25px">-60.0</text><text x="611.8" y="438.8" textLength="25.9" lengthAdjust="spacingAndGlyphs" style="font-family:&quot;Liberation Sans&quot;,sans-serif;font-size:12.5px;stroke:#000;stroke-width:0.25px">-70.0</text><text x="611.8" y="473.5" textLength="25.9" lengthAdjust="spacingAndGlyphs" style="font-family:&quot;Liberation Sans&quot;,sans-serif;font-size:12.5px;stroke:#000;stroke-width:0.25px">-80.0</text><text x="611.8" y="514.5" textLength="25.9" lengthAdjust="spacingAndGlyphs" style="font-family:&quot;Liberation Sans&quot;,sans-serif;font-size:12.5px;stroke:#000;stroke-width:0.25px">-92.1</text><text x="640.4" y="527.8" textLength="14.4" lengthAdjust="spacingAndGlyphs" style="font-family:&quot;Liberation Sans&quot;,sans-serif;font-size:12.5px;stroke:#000;stroke-width:0.25px">0.0</text><text x="704.0" y="527.8" textLength="31.6" lengthAdjust="spacingAndGlyphs" style="font-family:&quot;Liberation Sans&quot;,sans-serif;font-size:12.5px;stroke:#000;stroke-width:0.25px">1000.0</text><text x="776.2" y="527.8" textLength="31.6" lengthAdjust="spacingAndGlyphs" style="font-family:&quot;Liberation Sans&quot;,sans-serif;font-size:12.5px;stroke:#000;stroke-width:0.25px">2000.0</text><text x="848.4" y="527.8" textLength="31.6" lengthAdjust="spacingAndGlyphs" style="font-family:&quot;Liberation Sans&quot;,sans-serif;font-size:12.5px;stroke:#000;stroke-width:0.25px">3000.0</text><text x="922.2" y="527.8" textLength="31.6" lengthAdjust="spacingAndGlyphs" style="font-family:&quot;Liberation Sans&quot;,sans-serif;font-size:12.5px;stroke:#000;stroke-width:0.25px">4023.2</text><polyline points="648.5,408 650,370 652.4,324.5 654.5,352 656.6,408 659,370 662,327.5 664,352 666.4,410 668,360 669.6,332 671.5,365 673.6,421 676,372 679,343.6 681,378 683,421 685,380 687.4,352 689.5,385 691.6,421 694,392 695.8,370 697.4,370 699,395 701,426 703,395 704.4,379 706.5,402 709,434 711,405 713,387.4 715.5,410 718,437 720,410 722,390 724,412 726.6,442 729,415 731,402 733.5,430 736,456 738,432 739.4,419 742,442 745,463 746.5,452 748,442 750.5,452 753.6,462 757,451.6 759.6,467 762,455 765.6,439.4 767.5,455 769.6,479 771.5,466 773.6,456.6 775,465 776.6,476 779,472 782.4,466.6 784.4,479 786,471 788.6,479 790.5,474 793,471 796.4,478 798,468 800.4,453.6 802.4,465 804.4,474 806.5,469 808.4,463.6 810,476 811.6,486 813.6,477 820,476 822.5,475 825,476 827.6,494 829.6,475 833,473.6 837,482 839,476 841,482 843.6,466.6 847,475 849,487 851,477 854.4,493 858.4,478 861,491 864.5,484 868.4,476.6 871,484 873.6,490 877.6,480 880.4,497 883.6,481 886,487 890,476 893,486 896,473 899,479 901.6,494 905,480 907.6,488 909.6,481.6 912,490 914,484 918,492 921.6,484 927,493 931,486 934.4,477 936.6,511.5 938.4,480 939.4,486" fill="none" stroke="#1546b0" stroke-width="1.15" stroke-linejoin="miter"/></svg>
<div style="position:absolute;left:287px;top:537px;width:50px;height:19px;background:#fbfbfb;border:1px solid #000;box-sizing:border-box;box-shadow:inset -1px -1px 0 #606060;"></div>
<div style="position:absolute;left:298px;top:539px;width:21px;height:15px;background:#fbfbfb;box-shadow:inset 1px 1px 0 #a0a0a0;"></div>
<div style="position:absolute;left:318px;top:539px;width:17px;height:15px;background:#b4b4b4;box-shadow:inset 1px 1px 0 #e8e8e8,inset -1px -1px 0 #505050;"></div>
<svg style="position:absolute;left:318px;top:539px;" width="17" height="15" viewBox="0 0 17 15"><path d="M5 6h7l-3.500 4z" fill="#000"/></svg>
<svg style="position:absolute;left:287px;top:537px;" width="12" height="19" viewBox="0 0 12 19"><path d="M2 2.500h4M4 2.500v4M2 6.500h4" stroke="#000" stroke-width="1" fill="none"/><path d="M2 13L9.500 5" stroke="#000" stroke-width="1"/><ellipse cx="8" cy="13" rx="1.600" ry="2.600" fill="none" stroke="#000"/></svg>
<div class="t" style="left:305px;top:537.5px;line-height:17px;font-size:13px;font-weight:bold;color:#000;font-family:&quot;Liberation Sans&quot;,sans-serif;">v</div>
<div style="position:absolute;left:345px;top:538px;width:8px;height:18px;background:#c8c4bc;box-shadow:inset 1px 1px 0 #e8e8e8,inset -1px -1px 0 #707070;"></div>
<svg style="position:absolute;left:345px;top:538px;" width="8" height="18" viewBox="0 0 8 18"><path d="M1.5 7h5l-2.500-4zM1.5 11h5l-2.500 4z" fill="#000"/><path d="M0 9h8" stroke="#808080"/></svg>
<div style="position:absolute;left:354px;top:539px;width:33px;height:16px;background:#fbfbfb;border:1px solid #000;box-sizing:border-box;box-shadow:inset 1px 1px 0 #a0a0a0;"></div>
<div class="t" style="left:357px;top:537.3px;line-height:17px;font-size:13px;font-weight:bold;color:#000;font-family:&quot;Liberation Sans&quot;,sans-serif;transform:scaleX(0.8615);transform-origin:0 50%;">Hann</div>
<div style="position:absolute;left:397px;top:538px;width:8px;height:18px;background:#c8c4bc;box-shadow:inset 1px 1px 0 #e8e8e8,inset -1px -1px 0 #707070;"></div>
<svg style="position:absolute;left:397px;top:538px;" width="8" height="18" viewBox="0 0 8 18"><path d="M1.5 7h5l-2.500-4zM1.5 11h5l-2.500 4z" fill="#000"/><path d="M0 9h8" stroke="#808080"/></svg>
<div style="position:absolute;left:406px;top:539px;width:57px;height:15px;background:#fbfbfb;border-top:1px solid #808080;border-left:1px solid #808080;box-sizing:border-box;"></div>
<div class="t" style="left:407px;top:537.3px;line-height:17px;font-size:13px;font-weight:bold;color:#000;font-family:&quot;Liberation Sans&quot;,sans-serif;transform:scaleX(0.9588);transform-origin:0 50%;">205000.0</div>
<div class="t" style="left:468px;top:537.7px;line-height:17px;font-size:13px;font-weight:bold;color:#000;font-family:&quot;Liberation Sans&quot;,sans-serif;transform:scaleX(0.8810);transform-origin:0 50%;">Hz</div>
<div style="position:absolute;left:487px;top:538px;width:8px;height:18px;background:#c8c4bc;box-shadow:inset 1px 1px 0 #e8e8e8,inset -1px -1px 0 #707070;"></div>
<svg style="position:absolute;left:487px;top:538px;" width="8" height="18" viewBox="0 0 8 18"><path d="M1.5 7h5l-2.500-4zM1.5 11h5l-2.500 4z" fill="#000"/><path d="M0 9h8" stroke="#808080"/></svg>
<div style="position:absolute;left:495px;top:539px;width:44px;height:14px;background:#fbfbfb;border:1px solid #000;box-sizing:border-box;box-shadow:inset 1px 1px 0 #a0a0a0;"></div>
<div class="t" style="left:510px;top:537.0px;line-height:17px;font-size:13px;font-weight:bold;color:#000;font-family:&quot;Liberation Sans&quot;,sans-serif;transform:scaleX(0.9335);transform-origin:0 50%;">7000</div>
<div class="t" style="left:541px;top:537.0px;line-height:16px;font-size:12px;font-weight:bold;color:#000;font-family:&quot;Liberation Sans&quot;,sans-serif;transform:scaleX(0.9766);transform-origin:0 50%;-webkit-text-stroke:0.5px #000;">word</div>
<div style="position:absolute;left:654px;top:537px;width:50px;height:19px;background:#fbfbfb;border:1px solid #000;box-sizing:border-box;box-shadow:inset -1px -1px 0 #606060;"></div>
<div style="position:absolute;left:665px;top:539px;width:21px;height:15px;background:#fbfbfb;box-shadow:inset 1px 1px 0 #a0a0a0;"></div>
<div style="position:absolute;left:685px;top:539px;width:17px;height:15px;background:#b4b4b4;box-shadow:inset 1px 1px 0 #e8e8e8,inset -1px -1px 0 #505050;"></div>
<svg style="position:absolute;left:685px;top:539px;" width="17" height="15" viewBox="0 0 17 15"><path d="M5 6h7l-3.500 4z" fill="#000"/></svg>
<svg style="position:absolute;left:654px;top:537px;" width="12" height="19" viewBox="0 0 12 19"><path d="M2 2.500h4M4 2.500v4M2 6.500h4" stroke="#000" stroke-width="1" fill="none"/><path d="M2 13L9.500 5" stroke="#000" stroke-width="1"/><ellipse cx="8" cy="13" rx="1.600" ry="2.600" fill="none" stroke="#000"/></svg>
<div class="t" style="left:673px;top:537.5px;line-height:17px;font-size:13px;font-weight:bold;color:#000;font-family:&quot;Liberation Sans&quot;,sans-serif;">i</div>
<div style="position:absolute;left:712px;top:538px;width:8px;height:18px;background:#c8c4bc;box-shadow:inset 1px 1px 0 #e8e8e8,inset -1px -1px 0 #707070;"></div>
<svg style="position:absolute;left:712px;top:538px;" width="8" height="18" viewBox="0 0 8 18"><path d="M1.5 7h5l-2.500-4zM1.5 11h5l-2.500 4z" fill="#000"/><path d="M0 9h8" stroke="#808080"/></svg>
<div style="position:absolute;left:721px;top:539px;width:33px;height:16px;background:#fbfbfb;border:1px solid #000;box-sizing:border-box;box-shadow:inset 1px 1px 0 #a0a0a0;"></div>
<div class="t" style="left:724px;top:537.3px;line-height:17px;font-size:13px;font-weight:bold;color:#000;font-family:&quot;Liberation Sans&quot;,sans-serif;transform:scaleX(0.8615);transform-origin:0 50%;">Hann</div>
<div style="position:absolute;left:764px;top:538px;width:8px;height:18px;background:#c8c4bc;box-shadow:inset 1px 1px 0 #e8e8e8,inset -1px -1px 0 #707070;"></div>
<svg style="position:absolute;left:764px;top:538px;" width="8" height="18" viewBox="0 0 8 18"><path d="M1.5 7h5l-2.500-4zM1.5 11h5l-2.500 4z" fill="#000"/><path d="M0 9h8" stroke="#808080"/></svg>
<div style="position:absolute;left:773px;top:539px;width:57px;height:15px;background:#fbfbfb;border-top:1px solid #808080;border-left:1px solid #808080;box-sizing:border-box;"></div>
<div class="t" style="left:774px;top:537.3px;line-height:17px;font-size:13px;font-weight:bold;color:#000;font-family:&quot;Liberation Sans&quot;,sans-serif;transform:scaleX(0.9305);transform-origin:0 50%;">8100.0</div>
<div class="t" style="left:835px;top:537.7px;line-height:17px;font-size:13px;font-weight:bold;color:#000;font-family:&quot;Liberation Sans&quot;,sans-serif;transform:scaleX(0.8810);transform-origin:0 50%;">Hz</div>
<div style="position:absolute;left:854px;top:538px;width:8px;height:18px;background:#c8c4bc;box-shadow:inset 1px 1px 0 #e8e8e8,inset -1px -1px 0 #707070;"></div>
<svg style="position:absolute;left:854px;top:538px;" width="8" height="18" viewBox="0 0 8 18"><path d="M1.5 7h5l-2.500-4zM1.5 11h5l-2.500 4z" fill="#000"/><path d="M0 9h8" stroke="#808080"/></svg>
<div style="position:absolute;left:863px;top:539px;width:44px;height:14px;background:#fbfbfb;border:1px solid #000;box-sizing:border-box;box-shadow:inset 1px 1px 0 #a0a0a0;"></div>
<div class="t" style="left:884px;top:537.0px;line-height:17px;font-size:13px;font-weight:bold;color:#000;font-family:&quot;Liberation Sans&quot;,sans-serif;transform:scaleX(0.9215);transform-origin:0 50%;">300</div>
<div class="t" style="left:908px;top:537.0px;line-height:16px;font-size:12px;font-weight:bold;color:#000;font-family:&quot;Liberation Sans&quot;,sans-serif;transform:scaleX(0.9766);transform-origin:0 50%;-webkit-text-stroke:0.5px #000;">word</div>
</div></body></html>
